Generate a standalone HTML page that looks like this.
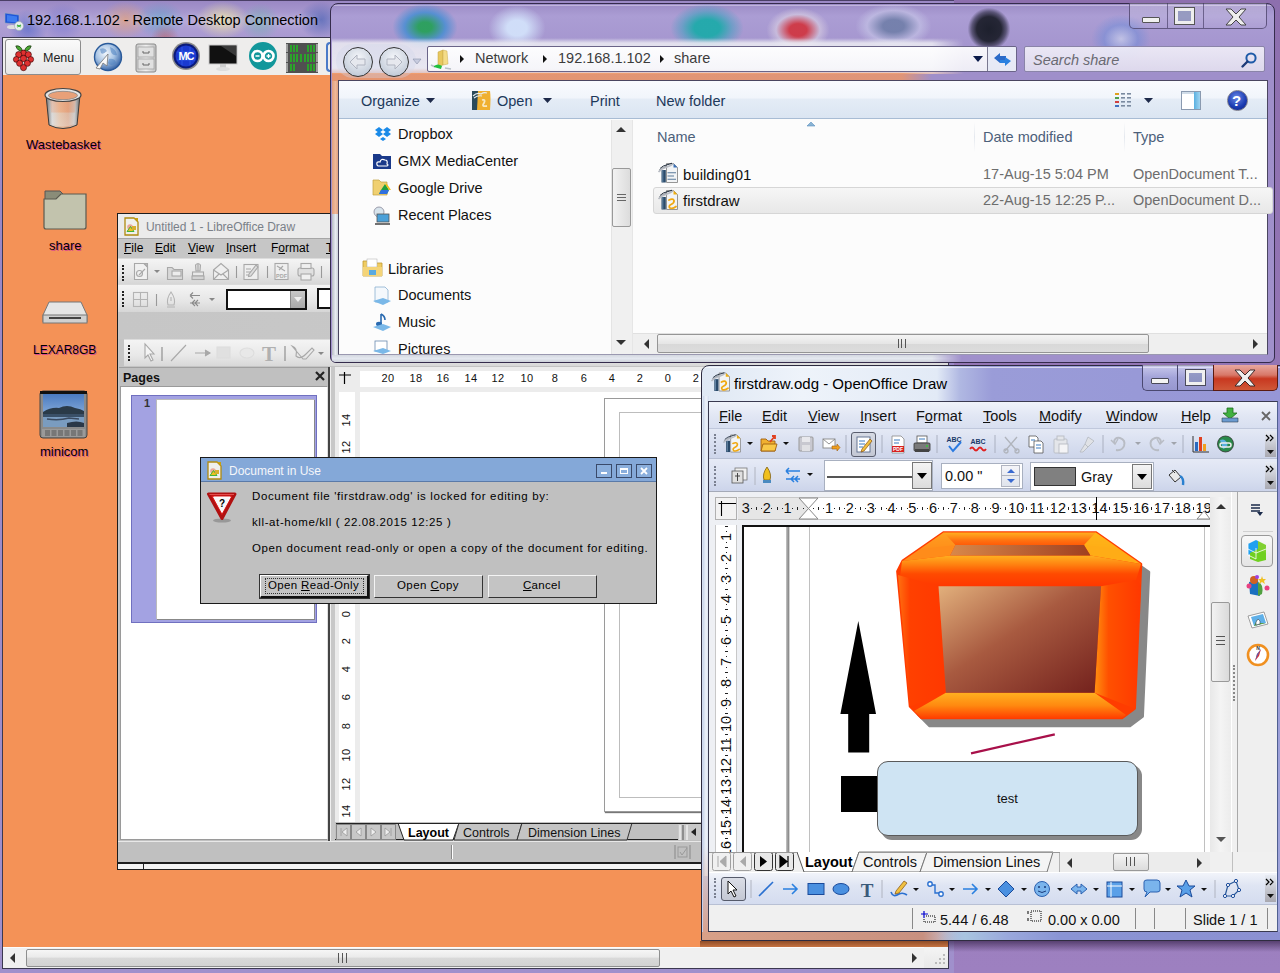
<!DOCTYPE html>
<html><head><meta charset="utf-8">
<style>
*{box-sizing:border-box;margin:0;padding:0}
html,body{width:1280px;height:973px;overflow:hidden}
body{position:relative;font-family:"Liberation Sans",sans-serif;background:linear-gradient(180deg,#8d6fae 0%,#9d80c0 100%);}
.a{position:absolute}
.t{position:absolute;white-space:nowrap;line-height:1}
svg{position:absolute}
</style></head><body>
<!-- ===== Remote Desktop window ===== -->
<div id="rdc" class="a" style="left:0;top:0;width:954px;height:973px;background:linear-gradient(180deg,#9a88c4 0px,#b0a2d6 20px,#a897cf 40px,#9988c6 200px,#a090cc 973px);border-top:1px solid #4a3f66;border-radius:0">
  <div class="a" style="left:8px;top:8px;width:40px;height:38px;background:radial-gradient(ellipse at center,rgba(60,90,200,.55),rgba(160,150,210,0) 70%)"></div>
  <div class="a" style="left:40px;top:2px;width:45px;height:38px;background:radial-gradient(ellipse at center,rgba(90,100,210,.5),rgba(160,150,210,0) 70%)"></div>
  <div class="a" style="left:100px;top:0px;width:50px;height:38px;background:radial-gradient(ellipse at center,rgba(235,160,110,.65),rgba(160,150,210,0) 70%)"></div>
  <div class="a" style="left:135px;top:0px;width:50px;height:38px;background:radial-gradient(ellipse at center,rgba(70,160,200,.55),rgba(160,150,210,0) 70%)"></div>
  <div class="a" style="left:150px;top:22px;width:30px;height:38px;background:radial-gradient(ellipse at center,rgba(200,70,50,.5),rgba(160,150,210,0) 70%)"></div>
  <div class="a" style="left:195px;top:0px;width:55px;height:38px;background:radial-gradient(ellipse at center,rgba(245,235,160,.75),rgba(160,150,210,0) 70%)"></div>
  <div class="a" style="left:240px;top:2px;width:40px;height:38px;background:radial-gradient(ellipse at center,rgba(100,180,170,.55),rgba(160,150,210,0) 70%)"></div>
  <div class="a" style="left:298px;top:0px;width:45px;height:38px;background:radial-gradient(ellipse at center,rgba(50,80,170,.6),rgba(160,150,210,0) 70%)"></div>
  <div class="a" style="left:380px;top:0px;width:60px;height:38px;background:radial-gradient(ellipse at center,rgba(230,230,240,.4),rgba(160,150,210,0) 70%)"></div>
  <svg class="a" style="left:4px;top:10px" width="20" height="20" viewBox="0 0 20 20"><path d="M1 2 L15 4 L15 13 L1 12 Z" fill="#1f55d8" stroke="#9ab" stroke-width=".6"/><path d="M3 4 L13 5.5 L13 11.5 L3 10.5Z" fill="#3d7cf0"/><ellipse cx="8" cy="16" rx="5" ry="2" fill="#ddd"/><circle cx="15" cy="15" r="4.5" fill="#e8eef0" stroke="#9aa" stroke-width=".6"/><path d="M13 14 L17 16 M13 16 L17 14" stroke="#3a3" stroke-width="1.2"/></svg>
  <div class="t" style="left:27px;top:12px;font-size:14.5px;color:#000;text-shadow:0 0 6px rgba(255,255,255,.5)">192.168.1.102 - Remote Desktop Connection</div>
  <div id="client" class="a" style="left:2px;top:36px;width:947px;height:932px;background:#f49257;border:1px solid #3b3850;overflow:hidden">
    <!-- panel -->
    <div class="a" style="left:0;top:0;width:946px;height:37px;background:#eeedec;"></div>
    <div class="a" style="left:2px;top:1px;width:76px;height:36px;background:linear-gradient(#fafafa,#e6e6e6);border:1px solid #8c8c8c;border-radius:3px"></div>
    <svg class="a" style="left:8px;top:4px" width="25" height="31" viewBox="0 0 26 30">
      <path d="M5 3 Q10 2 12 8 Q7 9 5 3Z M21 3 Q16 2 14 8 Q19 9 21 3Z" fill="#4aa832" stroke="#1a3a10" stroke-width=".8"/>
      <g fill="#e03030" stroke="#3a0808" stroke-width=".7">
      <circle cx="13" cy="10.5" r="3.2"/><circle cx="8" cy="12" r="3.2"/><circle cx="18" cy="12" r="3.2"/>
      <circle cx="5.5" cy="17" r="3"/><circle cx="20.5" cy="17" r="3"/><circle cx="13" cy="16" r="3.3"/>
      <circle cx="9" cy="21" r="3.2"/><circle cx="17" cy="21" r="3.2"/><circle cx="13" cy="25.5" r="3.2"/></g>
    </svg>
    <div class="t" style="left:40px;top:14px;font-size:12.5px;color:#222">Menu</div>
    <!-- launcher icons -->
    <svg class="a" style="left:88px;top:3px" width="32" height="32" viewBox="0 0 32 32"><defs><radialGradient id="glb" cx=".4" cy=".35" r=".7"><stop offset="0" stop-color="#f4f8fc"/><stop offset=".5" stop-color="#a8c4e4"/><stop offset="1" stop-color="#2a5aa0"/></radialGradient></defs><circle cx="17" cy="16" r="13.5" fill="url(#glb)" stroke="#2a5a9a" stroke-width="1.4"/><path d="M9 8 Q14 6 16 10 Q12 14 10 12Z M19 6 Q25 8 26 14 Q22 15 20 11Z M18 18 Q24 17 25 22 Q20 26 17 22Z" fill="#4a80c0" opacity=".55"/><path d="M5 27 L17 13 L16 25 L12 22 L9 28Z" fill="#fafafa" stroke="#777" stroke-width=".8"/></svg>
    <svg class="a" style="left:131px;top:5px" width="24" height="30" viewBox="0 0 24 30"><defs><linearGradient id="cab" x1="0" x2="1"><stop offset="0" stop-color="#c8c8c8"/><stop offset=".5" stop-color="#f0f0f0"/><stop offset="1" stop-color="#c0c0c0"/></linearGradient></defs><rect x="2" y="1" width="20" height="28" rx="2" fill="url(#cab)" stroke="#8a8a8a"/><rect x="4" y="4" width="16" height="10" fill="#e0e0e0" stroke="#9a9a9a" stroke-width=".7"/><rect x="4" y="16" width="16" height="10" fill="#e0e0e0" stroke="#9a9a9a" stroke-width=".7"/><path d="M9 8 L9 10 L15 10 L15 8" stroke="#666" fill="none"/><path d="M9 20 L9 22 L15 22 L15 20" stroke="#666" fill="none"/></svg>
    <svg class="a" style="left:168px;top:3px" width="30" height="30" viewBox="0 0 30 30"><circle cx="15" cy="15" r="14" fill="#8a8a8a"/><circle cx="15" cy="15" r="12.5" fill="#0a1a7a"/><circle cx="15" cy="15" r="10.5" fill="#1a3ad0"/><path d="M6 11 L24 11 M6 19 L24 19 M11 6 L11 24 M19 6 L19 24" stroke="#3a6af0" stroke-width=".6"/><text x="15" y="19" font-size="11" font-weight="bold" fill="#fff" text-anchor="middle" font-family="Liberation Sans" letter-spacing="-1">MC</text></svg>
    <svg class="a" style="left:204px;top:6px" width="32" height="28" viewBox="0 0 32 28"><rect x="2" y="1" width="28" height="19" fill="#111" stroke="#ccc"/><path d="M14 2 L29 2 L29 12Z" fill="#3a3a3a"/><rect x="13" y="20" width="6" height="4" fill="#ccc"/><ellipse cx="16" cy="25" rx="7" ry="2" fill="#ddd"/></svg>
    <svg class="a" style="left:245px;top:3px" width="30" height="30" viewBox="0 0 30 30"><circle cx="15" cy="15" r="14" fill="#12979b"/><path d="M4.5 15 a5 5 0 1 1 10 0 a5 5 0 1 1 -10 0 M15.5 15 a5 5 0 1 1 10 0 a5 5 0 1 1 -10 0" fill="none" stroke="#fff" stroke-width="2.6"/><path d="M7.5 15 L11.5 15 M18.5 15 L22.5 15 M20.5 13 L20.5 17" stroke="#fff" stroke-width="1.3"/></svg>
    <svg class="a" style="left:282px;top:5px" width="34" height="30" viewBox="0 0 34 30"><rect x="1" y="0" width="32" height="30" fill="#505050"/><g stroke="#1fc01f" stroke-width="1.5"><path d="M6 2V9M9 2V9M12 2V9M23 2V9M26 2V9M29 2V9M6 11V19M9 11V19M12 11V19M16 11V19M20 11V19M23 11V19M26 11V19M29 11V19M6 21V28M9 21V28M23 21V28M26 21V28M29 21V28"/></g><g stroke="#eee" stroke-width="1"><path d="M2 1V9M32 1V9M2 10V19M32 10V19M2 20V29M32 20V29"/></g></svg>
    <div class="a" style="left:323px;top:4px;width:10px;height:30px;border:2px solid #4a7ac8;border-right:none;border-radius:4px 0 0 4px"></div>

    <!-- desktop icons -->
    <svg class="a" style="left:40px;top:49px" width="40" height="45" viewBox="0 0 40 45"><defs><linearGradient id="bin" x1="0" x2="1"><stop offset="0" stop-color="#707070"/><stop offset=".18" stop-color="#d8d8d8"/><stop offset=".4" stop-color="#e8c0a0"/><stop offset=".65" stop-color="#e0a888"/><stop offset=".85" stop-color="#c8c8c8"/><stop offset="1" stop-color="#6a6a6a"/></linearGradient><linearGradient id="binv" x1="0" y1="0" x2="0" y2="1"><stop offset="0" stop-color="#f09060" stop-opacity=".35"/><stop offset=".5" stop-color="#f09060" stop-opacity=".25"/><stop offset=".55" stop-color="#dcdcdc" stop-opacity=".3"/><stop offset="1" stop-color="#e8e8e8" stop-opacity=".4"/></linearGradient></defs><path d="M3 8 L6 38 Q20 45 34 38 L37 8Z" fill="url(#bin)" stroke="#3a3a3a" stroke-width="1"/><path d="M7 10 L9 37 Q20 42 31 37 L33 10Z" fill="url(#binv)"/><ellipse cx="20" cy="8" rx="18" ry="6.5" fill="#e4e4e4" stroke="#444" stroke-width="1.2"/><ellipse cx="20" cy="8.5" rx="14.5" ry="4.2" fill="#e8a078" stroke="#888" stroke-width=".8"/></svg>
    <div class="t" style="left:23px;top:100px;font-size:13px;color:#000;text-shadow:1px 1px 0 rgba(190,0,190,.5)">Wastebasket</div>
    <svg class="a" style="left:39px;top:152px" width="46" height="40" viewBox="0 0 46 40"><path d="M3 1 L18 1 L22 5 L43 5 L43 20 L3 20Z" fill="#8a8c78" stroke="#555" stroke-width="1"/><path d="M2 9 L14 9 L19 4 L44 4 L44 37 Q44 39 42 39 L4 39 Q2 39 2 37Z" fill="#c2c3ad" stroke="#5a5a50" stroke-width="1.2"/></svg>
    <div class="t" style="left:46px;top:201px;font-size:13px;color:#000;text-shadow:1px 1px 0 rgba(190,0,190,.5)">share</div>
    <svg class="a" style="left:38px;top:263px" width="48" height="24" viewBox="0 0 48 24"><path d="M8 1 L40 1 L46 14 L46 21 L2 21 L2 14Z" fill="#e6e6e6" stroke="#777" stroke-width="1"/><rect x="2" y="14" width="44" height="8" fill="#d0d0d0" stroke="#777" stroke-width="1"/><rect x="8" y="16" width="32" height="2" fill="#444"/></svg>
    <div class="t" style="left:30px;top:306px;font-size:12px;color:#000;text-shadow:1px 1px 0 rgba(190,0,190,.5);letter-spacing:0px">LEXAR8GB</div>
    <svg class="a" style="left:36px;top:352px" width="50" height="49" viewBox="0 0 50 49"><defs><linearGradient id="sky" x1="0" y1="0" x2="0" y2="1"><stop offset="0" stop-color="#4a7ac0"/><stop offset="1" stop-color="#a8c8e8"/></linearGradient></defs><rect x="1" y="1" width="47" height="47" rx="3" fill="#8a8a8a" stroke="#444"/><rect x="1" y="1" width="47" height="3" fill="#111"/><rect x="4" y="4" width="41" height="33" fill="url(#sky)"/><path d="M4 22 Q12 17 20 18 Q28 14 36 18 Q42 19 45 21 L45 24 L4 24Z" fill="#2a3a48"/><rect x="4" y="24" width="41" height="3" fill="#3a5068"/><path d="M4 27 L45 27 L45 37 L4 37Z" fill="#7a9cc0"/><path d="M8 29 Q20 31 30 28 L40 29" stroke="#3a4a60" stroke-width="1.5" fill="none"/><path d="M28 33 Q38 30 45 33 L45 37 L28 37Z" fill="#2a3848"/><rect x="3" y="39" width="43" height="8" fill="#9a9a9a"/><g fill="#777"><rect x="6" y="40" width="5" height="6"/><rect x="12.5" y="40" width="5" height="6"/><rect x="19" y="40" width="5" height="6"/><rect x="25.5" y="40" width="5" height="6"/><rect x="32" y="40" width="5" height="6"/><rect x="38.5" y="40" width="5" height="6"/></g></svg>
    <div class="t" style="left:37px;top:407px;font-size:13px;color:#000;text-shadow:1px 1px 0 rgba(190,0,190,.5)">minicom</div>

    <!-- bottom scrollbar -->
    <div class="a" style="left:0;top:909px;width:946px;height:22px;background:#f0f0f0;border-top:1px solid #fcfcfc"></div>
    <svg class="a" style="left:6px;top:914px" width="8" height="12" viewBox="0 0 8 12"><path d="M6 1 L1 6 L6 11Z" fill="#333"/></svg>
    <div class="a" style="left:23px;top:911px;width:634px;height:18px;background:linear-gradient(#f6f6f6 0%,#eaeaea 45%,#d9d9d9 50%,#d2d2d2 100%);border:1px solid #8e8f8f;border-radius:2px"></div>
    <div class="a" style="left:335px;top:915px;width:9px;height:10px;border-left:1px solid #555;border-right:1px solid #555"></div>
    <div class="a" style="left:339px;top:915px;width:1px;height:10px;background:#555"></div>
    <svg class="a" style="left:907px;top:914px" width="8" height="12" viewBox="0 0 8 12"><path d="M2 1 L7 6 L2 11Z" fill="#333"/></svg>
    <div class="a" style="left:921px;top:909px;width:25px;height:22px;background:linear-gradient(180deg,#f4f4f4,#e8e8e8)"></div>
    <svg class="a" style="left:930px;top:914px" width="14" height="14" viewBox="0 0 14 14"><g fill="#bbb"><rect x="10" y="2" width="2" height="2"/><rect x="6" y="6" width="2" height="2"/><rect x="10" y="6" width="2" height="2"/><rect x="2" y="10" width="2" height="2"/><rect x="6" y="10" width="2" height="2"/><rect x="10" y="10" width="2" height="2"/></g></svg>
    <div class="a" style="left:697px;top:903px;width:250px;height:6px;background:linear-gradient(180deg,rgba(60,20,0,.55),rgba(60,20,0,.25))"></div>
    <!-- ===== LibreOffice window ===== -->
    <div id="lo" class="a" style="left:114px;top:175px;width:850px;height:657px;overflow:hidden">
      <div class="a" style="left:0;top:0;width:850px;height:657px;border:1px solid #1c1c1c;background:#c4c4c4"></div>
      <div class="a" style="left:1px;top:1px;width:848px;height:24px;background:#ebebeb"></div>
      <svg style="left:7px;top:4px" width="15" height="19" viewBox="0 0 15 19"><path d="M1 1 L10 1 L14 5 L14 18 L1 18Z" fill="#f0f0ec" stroke="#b08a10" stroke-width="1.3"/><path d="M10 1 L14 1 L14 5Z" fill="#c8a010"/><circle cx="6" cy="10" r="2.8" fill="#e8a090" opacity=".9"/><path d="M3 14.5 L6.5 9.5 L10 14.5Z" fill="#f0c020" stroke="#30b030" stroke-width=".9"/><rect x="8" y="9" width="4" height="4" fill="#d8b030"/></svg>
      <div class="t" style="left:29px;top:8px;font-size:12px;color:#7a8088;letter-spacing:-.05px">Untitled 1 - LibreOffice Draw</div>
      <div class="a" style="left:1px;top:25px;width:848px;height:1px;background:#a6a6a6"></div>
      <div class="a" style="left:1px;top:26px;width:848px;height:19px;background:#c6c6c6"></div>
      <div class="t" style="left:7px;top:29px;font-size:12px;color:#000;word-spacing:0">
        <span class="t" style="left:0"><u>F</u>ile</span><span class="t" style="left:31px"><u>E</u>dit</span><span class="t" style="left:64px"><u>V</u>iew</span><span class="t" style="left:102px"><u>I</u>nsert</span><span class="t" style="left:147px">F<u>o</u>rmat</span><span class="t" style="left:202px"><u>T</u>ools</span>
      </div>
      <!-- toolbar 1 -->
      <div class="a" style="left:1px;top:45px;width:848px;height:26px;background:linear-gradient(#f4f4f4,#e6e6e6 60%,#d6d6d6);border-top:1px solid #dcdcdc"></div>
      <svg style="left:15px;top:48px" width="300" height="22" viewBox="0 0 300 22" fill="none" stroke="#a8a8a8" stroke-width="1.1">
        <path d="M2.5 2.5 L12 2.5 L15.5 6 L15.5 18.5 L2.5 18.5Z" fill="#f0f0f0"/><path d="M12 2.5 L15.5 2.5 L15.5 6Z" fill="#bbb"/><circle cx="7.5" cy="12.5" r="3"/><path d="M7 14 L13 8"/>
        <path d="M22 9 L28 9 L25 12Z" fill="#888" stroke="none"/>
        <path d="M35.5 6.5 L40 6.5 L42 8.5 L50.5 8.5 L50.5 18.5 L35.5 18.5Z" fill="#d8d8d8"/><rect x="40" y="10" width="9" height="5" fill="#ececec"/>
        <path d="M66 2 L66 10 M63.5 4 Q66 1 68.5 4 L68 10 L64 10Z" fill="#ddd"/><rect x="60.5" y="11" width="11" height="4" fill="#e8e8e8"/><rect x="60" y="15" width="12" height="3.5" fill="#d4d4d4"/>
        <path d="M81.5 9 L89 2.5 L96.5 9 L96.5 18.5 L81.5 18.5Z" fill="#efefef"/><path d="M81.5 9 L89 14 L96.5 9 M81.5 18.5 L87 13 M96.5 18.5 L91 13"/>
        <path d="M104.5 5 L104.5 17" stroke="#999"/>
        <rect x="112" y="3.5" width="14" height="15" fill="#efefef"/><path d="M114 8 L119 8 M114 11 L119 11 M114 14 L118 14"/><path d="M117 13 L124 4 L126 6 L119 15 L116.5 15.5Z" fill="#ddd"/>
        <path d="M135.5 5 L135.5 17" stroke="#999"/>
        <rect x="143" y="2.5" width="13" height="16" fill="#efefef"/><path d="M145 5 L153 10 M147 9 L151 5"/><text x="149.5" y="17" font-size="5.5" font-weight="bold" fill="#a8a8a8" stroke="none" text-anchor="middle" font-family="Liberation Sans">PDF</text>
        <rect x="166" y="7" width="16" height="8" rx="2" fill="#e0e0e0"/><rect x="169" y="2.5" width="10" height="5" fill="#efefef"/><rect x="169" y="13" width="10" height="6" fill="#f0f0f0"/>
        <path d="M189.5 5 L189.5 17" stroke="#999"/>
      </svg>
      <!-- toolbar 2 -->
      <div class="a" style="left:1px;top:71px;width:848px;height:28px;background:linear-gradient(#f4f4f4,#e6e6e6 60%,#d6d6d6);border-top:1px solid #dadada"></div>
      <svg style="left:14px;top:76px" width="100" height="22" viewBox="0 0 100 22" fill="none" stroke="#b4b4b4" stroke-width="1.1">
        <rect x="2.5" y="3.5" width="14" height="14"/><path d="M9.5 3.5 L9.5 17.5 M2.5 10.5 L16.5 10.5"/>
        <path d="M25.5 5 L25.5 17" stroke="#999"/>
        <path d="M40 3 Q35 10 37 16 L43 16 Q45 10 40 3Z M40 8 L40 12 M36 18 L44 18"/>
        <path d="M59 6.5 L69 6.5 M59 6.5 L62 3.5 M59 6.5 L62 9.5 M59 14 L69 14 M61 14 L64 11 M61 14 L64 17 M64 14 L67 11 M64 14 L67 17" stroke="#8a8a8a"/>
        <path d="M78 9 L84 9 L81 12Z" fill="#888" stroke="none"/>
      </svg>
      <div class="a" style="left:109px;top:76px;width:81px;height:21px;background:#fff;border:2px solid #111;border-right-width:2px"></div>
      <div class="a" style="left:173px;top:78px;width:15px;height:17px;background:linear-gradient(#c8c8c8,#a8a8a8);border-left:1px solid #888"></div>
      <svg style="left:176px;top:83px" width="10" height="7" viewBox="0 0 10 7"><path d="M1 1 L9 1 L5 6Z" fill="#eee"/></svg>
      <div class="a" style="left:200px;top:75px;width:30px;height:21px;background:#fff;border:2px solid #111"></div>
      <!-- gray area -->
      <div class="a" style="left:1px;top:99px;width:848px;height:27px;background:linear-gradient(90deg,#c6c6c6,#cbcbcb)"></div>
      <!-- toolbar 3 -->
      <div class="a" style="left:7px;top:126px;width:842px;height:27px;background:linear-gradient(#f4f4f4,#e8e8e8 60%,#d8d8d8);border-top:1px solid #dcdcdc"></div>
      <svg style="left:23px;top:129px" width="200" height="22" viewBox="0 0 200 22" fill="none" stroke="#a8a8a8" stroke-width="1.1">
        <path d="M5 2 L5 16 L8 13 L11 19 L13 18 L10 12 L14 12Z" fill="#f4f4f4"/>
        <path d="M22 5 L22 19" stroke="#888"/>
        <path d="M31 19 L46 3"/>
        <path d="M55 11 L69 11 M65 8 L70 11 L65 14" fill="#aaa"/>
        <rect x="77" y="5" width="13" height="11" fill="#e0e0e0" stroke="#ddd"/>
        <ellipse cx="107" cy="11" rx="7" ry="5" fill="#e8e8e8" stroke="#ddd"/>
        <text x="122" y="19" font-size="21" font-weight="bold" fill="#b0b0b0" stroke="none" font-family="Liberation Serif">T</text>
        <path d="M145 4 L145 19" stroke="#888"/>
        <path d="M152 4 Q158 6 156 14 Q160 18 166 12 L172 6 L174 8 L166 17 L163 17Z"/>
        <path d="M178 10 L184 10 L181 13Z" fill="#888" stroke="none"/>
      </svg>
      <div class="a" style="left:5px;top:52px;width:2px;height:16px;border-left:2px dotted #222"></div>
      <div class="a" style="left:5px;top:78px;height:18px;width:2px;height:16px;border-left:2px dotted #222"></div>
      <div class="a" style="left:11px;;top:132px;width:2px;height:16px;border-left:2px dotted #222"></div>
      <!-- Pages panel -->
      <div class="a" style="left:2px;top:154px;width:209px;height:474px;background:#c0c0c0;border-top:1px solid #a0a0a0"></div>
      <div class="t" style="left:6px;top:159px;font-size:12.5px;font-weight:bold;color:#111">Pages</div>
      <svg style="left:197px;top:157px" width="12" height="12" viewBox="0 0 12 12"><path d="M2 2 L10 10 M10 2 L2 10" stroke="#222" stroke-width="2.2"/></svg>
      <div class="a" style="left:3px;top:173px;width:208px;height:454px;background:#fff;border:1px solid #9a9a9a;border-right-color:#e0e0e0"></div>
      <div class="a" style="left:14px;top:182px;width:186px;height:228px;background:#a3a2e2;border:1px solid #7070c0"></div>
      <div class="t" style="left:27px;top:185px;font-size:11px;font-weight:bold;color:#333">1</div>
      <div class="a" style="left:39px;top:186px;width:158px;height:220px;background:#fff;border-left:1px solid #bbb;border-top:1px solid #bbb;box-shadow:1px 1px 0 #888"></div>
      <!-- splitter -->
      <div class="a" style="left:211px;top:154px;width:2px;height:474px;background:#444"></div>
      <div class="a" style="left:213px;top:154px;width:5px;height:474px;background:#c8c8c8"></div>
      <div class="a" style="left:213px;top:154px;width:1px;height:474px;background:#f0f0f0"></div>
      <!-- ruler/canvas area -->
      <div class="a" style="left:218px;top:154px;width:400px;height:456px;background:#ececec"></div>
      <div class="a" style="left:243px;top:158px;width:400px;height:16px;background:#fff"></div>
      <div class="a" style="left:222px;top:179px;width:16px;height:431px;background:#fff"></div>
      <div class="a" style="left:243px;top:179px;width:400px;height:431px;background:#fff"></div>
      <svg style="left:221px;top:158px" width="14" height="14" viewBox="0 0 14 14"><path d="M1 4 L13 4 M6.5 1 L6.5 13" stroke="#000" stroke-width="1.2"/></svg>
      <div class="a" style="left:243px;top:160px;width:400px;height:14px;font-size:11px;color:#111;letter-spacing:.4px"><div class="t" style="left:16px;top:0;width:24px;text-align:center">20</div><div class="t" style="left:44px;top:0;width:24px;text-align:center">18</div><div class="t" style="left:71px;top:0;width:24px;text-align:center">16</div><div class="t" style="left:99px;top:0;width:24px;text-align:center">14</div><div class="t" style="left:126px;top:0;width:24px;text-align:center">12</div><div class="t" style="left:155px;top:0;width:24px;text-align:center">10</div><div class="t" style="left:183px;top:0;width:24px;text-align:center">8</div><div class="t" style="left:212px;top:0;width:24px;text-align:center">6</div><div class="t" style="left:240px;top:0;width:24px;text-align:center">4</div><div class="t" style="left:268px;top:0;width:24px;text-align:center">2</div><div class="t" style="left:296px;top:0;width:24px;text-align:center">0</div><div class="t" style="left:324px;top:0;width:24px;text-align:center">2</div></div>
      <div class="a" style="left:222px;top:179px;width:16px;height:431px;font-size:11px;color:#111;letter-spacing:.4px"><div class="t" style="left:-4px;top:22px;width:24px;height:12px;text-align:center;transform:rotate(-90deg)">14</div><div class="t" style="left:-4px;top:49px;width:24px;height:12px;text-align:center;transform:rotate(-90deg)">12</div><div class="t" style="left:-4px;top:216px;width:24px;height:12px;text-align:center;transform:rotate(-90deg)">0</div><div class="t" style="left:-4px;top:243px;width:24px;height:12px;text-align:center;transform:rotate(-90deg)">2</div><div class="t" style="left:-4px;top:271px;width:24px;height:12px;text-align:center;transform:rotate(-90deg)">4</div><div class="t" style="left:-4px;top:299px;width:24px;height:12px;text-align:center;transform:rotate(-90deg)">6</div><div class="t" style="left:-4px;top:328px;width:24px;height:12px;text-align:center;transform:rotate(-90deg)">8</div><div class="t" style="left:-4px;top:357px;width:24px;height:12px;text-align:center;transform:rotate(-90deg)">10</div><div class="t" style="left:-4px;top:386px;width:24px;height:12px;text-align:center;transform:rotate(-90deg)">12</div><div class="t" style="left:-4px;top:413px;width:24px;height:12px;text-align:center;transform:rotate(-90deg)">14</div></div>
      <!-- page outline -->
      <div class="a" style="left:487px;top:185px;width:200px;height:414px;background:#fff;border:1px solid #9a9a9a;box-shadow:1px 1px 1px #777"></div>
      <div class="a" style="left:502px;top:199px;width:200px;height:386px;border:1px solid #bdbdbd"></div>
      <!-- tab bar -->
      <div class="a" style="left:218px;top:609px;width:400px;height:19px;background:#c0c0c0"></div>
      <div class="a" style="left:218px;top:626px;width:400px;height:1px;background:#222"></div>
      <svg style="left:219px;top:610px" width="500" height="18" viewBox="0 0 500 18">
        <g fill="#c8c8c8" stroke="#888"><rect x="0.5" y="1.5" width="14" height="15"/><rect x="15.5" y="1.5" width="14" height="15"/><rect x="30.5" y="1.5" width="14" height="15"/><rect x="45.5" y="1.5" width="14" height="15"/></g>
        <g fill="#eee" stroke="#999" stroke-width=".8"><path d="M5 5 L5 13 M11 5 L6 9 L11 13Z"/><path d="M25 5 L20 9 L25 13Z"/><path d="M35 5 L40 9 L35 13Z"/><path d="M49 5 L54 9 L49 13Z M55 5 L55 13"/></g>
        <path d="M62 0 L68 17 L117 17 L123 0" fill="#fff" stroke="#222" stroke-width="1"/>
        <path d="M123 0 L118 17 L181 17 L186 0Z" fill="#c4c4c4" stroke="#333" stroke-width="1"/>
        <path d="M186 0 L181 17 L291 17 L296 0Z" fill="#c4c4c4" stroke="#333" stroke-width="1"/>
        <path d="M0 0.5 L500 0.5" stroke="#222"/>
        <rect x="342" y="1" width="40" height="16" fill="#c8c8c8" stroke="none"/>
        <path d="M344 2 L344 17" stroke="#fff"/><path d="M347 2 L347 17" stroke="#555"/>
        <path d="M351 2 L351 17" stroke="#fff"/><path d="M360 5 L355 9 L360 13Z" fill="#222"/>
      </svg>
      <div class="t" style="left:291px;top:614px;font-size:12.5px;font-weight:bold;color:#000">Layout</div>
      <div class="t" style="left:346px;top:614px;font-size:12.5px;color:#111">Controls</div>
      <div class="t" style="left:411px;top:614px;font-size:12.5px;color:#111">Dimension Lines</div>
      <!-- status bar -->
      <div class="a" style="left:1px;top:628px;width:848px;height:21px;background:#c0c0c0;border-top:1px solid #e8e8e8"></div>
      <div class="a" style="left:334px;top:632px;width:2px;height:14px;background:#888;border-right:1px solid #fff"></div>
      <svg style="left:555px;top:631px" width="20" height="16" viewBox="0 0 20 16"><path d="M3 1 L3 15 M18 1 L18 15" stroke="#888"/><rect x="6" y="3" width="9" height="10" fill="none" stroke="#999"/><path d="M8 8 L10 11 L15 4" stroke="#999" fill="none"/></svg>
      <div class="a" style="left:1px;top:649px;width:848px;height:2px;background:#1c1c1c"></div>
      <div class="a" style="left:1px;top:651px;width:848px;height:5px;background:#f2f2f2"></div>
      <div class="a" style="left:26px;top:651px;width:1px;height:5px;background:#222"></div>
    </div>
    <!-- ===== Dialog ===== -->
    <div id="dlg" class="a" style="left:197px;top:419px;width:457px;height:147px">
      <div class="a" style="left:0;top:0;width:457px;height:147px;background:#c0c0c0;border:1px solid #1a1a1a"></div>
      <div class="a" style="left:1px;top:1px;width:455px;height:24px;background:#84a8d8;border-bottom:1px solid #5a7aa8"></div>
      <svg style="left:7px;top:4px" width="15" height="19" viewBox="0 0 15 19"><path d="M1 1 L10 1 L14 5 L14 18 L1 18Z" fill="#f0f0ec" stroke="#b08a10" stroke-width="1.3"/><path d="M10 1 L14 1 L14 5Z" fill="#c8a010"/><circle cx="6" cy="10" r="2.8" fill="#e8a090" opacity=".9"/><path d="M3 14.5 L6.5 9.5 L10 14.5Z" fill="#f0c020" stroke="#30b030" stroke-width=".9"/><rect x="8" y="9" width="4" height="4" fill="#d8b030"/></svg>
      <div class="t" style="left:29px;top:8px;font-size:12px;color:#f4f6fa">Document in Use</div>
      <div class="a" style="left:396px;top:7px;width:16px;height:14px;border:1px solid #3a4a6a;background:#8aaedc"></div>
      <div class="a" style="left:401px;top:15px;width:6px;height:2px;background:#fff"></div>
      <div class="a" style="left:416px;top:7px;width:16px;height:14px;border:1px solid #3a4a6a;background:#8aaedc"></div>
      <div class="a" style="left:420px;top:11px;width:8px;height:6px;border:1px solid #fff;border-top-width:2px"></div>
      <div class="a" style="left:436px;top:7px;width:16px;height:14px;border:1px solid #3a4a6a;background:#8aaedc"></div>
      <svg style="left:439px;top:9px" width="10" height="10" viewBox="0 0 10 10"><path d="M2 2 L8 8 M8 2 L2 8" stroke="#fff" stroke-width="1.8"/></svg>
      <svg style="left:6px;top:34px" width="32" height="32" viewBox="0 0 32 32"><ellipse cx="16" cy="29.5" rx="9" ry="2" fill="#888" opacity=".7"/><path d="M2.5 3 L29 3 L16 27.5Z" fill="#dc1c1c" stroke="#b01010" stroke-width="3" stroke-linejoin="round"/><path d="M3.5 3.5 L28 3.5" stroke="#f06060" stroke-width=".8"/><path d="M7.6 6 L24.4 6 L16 21.5Z" fill="#f8f8f8" stroke="#fff" stroke-width="1" stroke-linejoin="round"/><text x="16" y="15.5" font-size="10" font-weight="bold" fill="#000" text-anchor="middle" font-family="Liberation Sans">?</text></svg>
      <div class="t" style="left:52px;top:34px;font-size:11.5px;letter-spacing:.62px;color:#000">Document file 'firstdraw.odg' is locked for editing by:</div>
      <div class="t" style="left:52px;top:60px;font-size:11.5px;letter-spacing:.6px;color:#000">kll-at-home/kll ( 22.08.2015 12:25 )</div>
      <div class="t" style="left:52px;top:86px;font-size:11.5px;letter-spacing:.62px;color:#000">Open document read-only or open a copy of the document for editing.</div>
      <div class="a" style="left:60px;top:118px;width:109px;height:23px;background:#c4c4c4;border:1px solid #fff;border-right:2px solid #111;border-bottom:2px solid #111;outline:1px solid #333"></div>
      <div class="a" style="left:65px;top:121px;width:99px;height:16px;border:1px dotted #333"></div>
      <div class="t" style="left:68px;top:123px;font-size:11.5px;letter-spacing:.34px;color:#000">Open <u>R</u>ead-Only</div>
      <div class="a" style="left:174px;top:118px;width:109px;height:23px;background:#c4c4c4;border:1px solid #f4f4f4;border-right:1px solid #333;border-bottom:1px solid #333"></div>
      <div class="t" style="left:197px;top:123px;font-size:11.5px;letter-spacing:.42px;color:#000">Open <u>C</u>opy</div>
      <div class="a" style="left:288px;top:118px;width:109px;height:23px;background:#c4c4c4;border:1px solid #f4f4f4;border-right:1px solid #333;border-bottom:1px solid #333"></div>
      <div class="t" style="left:323px;top:123px;font-size:11.5px;letter-spacing:.28px;color:#000"><u>C</u>ancel</div>
    </div>

  </div>
</div>
<!-- ===== Explorer window ===== -->
<div id="exp" class="a" style="left:330px;top:3px;width:945px;height:360px">
  <div class="a" style="left:0;top:0;width:945px;height:360px;border:1px solid #352c4c;border-radius:8px 8px 6px 6px;background:linear-gradient(180deg,#9c8cc6 0px,#ab9dd4 12px,#a596cf 40px,#9f8fca 70px,#a090cb 360px);overflow:hidden">
    <div class="a" style="left:1px;top:1px;width:941px;height:1px;background:rgba(255,255,255,.35)"></div>
    <div class="a" style="left:62px;top:0px;width:64px;height:46px;background:radial-gradient(ellipse at center,rgba(40,160,90,.95) 15%,rgba(60,140,210,.75) 45%,rgba(160,150,210,0) 72%)"></div>
    <div class="a" style="left:158px;top:2px;width:56px;height:44px;background:radial-gradient(ellipse at center,rgba(210,225,250,.95) 25%,rgba(160,150,210,0) 72%)"></div>
    <div class="a" style="left:340px;top:0px;width:72px;height:48px;background:radial-gradient(ellipse at center,rgba(30,170,170,.95) 25%,rgba(60,160,190,.5) 50%,rgba(160,150,210,0) 72%)"></div>
    <div class="a" style="left:436px;top:4px;width:62px;height:44px;background:radial-gradient(ellipse at center,rgba(210,50,60,.9) 20%,rgba(230,220,230,.5) 50%,rgba(160,150,210,0) 72%)"></div>
    <div class="a" style="left:525px;top:0px;width:75px;height:44px;background:radial-gradient(ellipse at center,rgba(100,120,160,.75) 20%,rgba(210,215,240,.45) 50%,rgba(160,150,210,0) 72%)"></div>
    <div class="a" style="left:629px;top:-4px;width:58px;height:58px;background:radial-gradient(circle at center,rgba(25,28,40,.97) 0%,rgba(30,32,45,.95) 30%,rgba(40,40,60,.6) 42%,rgba(160,150,210,0) 52%)"></div>
    <div class="a" style="left:760px;top:10px;width:60px;height:50px;background:radial-gradient(ellipse at center,rgba(220,235,250,.5),rgba(70,130,220,.3) 40%,rgba(160,150,210,0) 70%)"></div>
    <div class="a" style="left:1px;top:34px;width:632px;height:36px;background:linear-gradient(180deg,rgba(236,236,242,0) 0px,rgba(236,236,242,.85) 5px,rgba(238,238,244,.92) 30px,rgba(240,200,180,.8) 36px);-webkit-mask-image:linear-gradient(90deg,#000 600px,transparent 632px)"></div>
    <div class="a" style="left:1px;top:69px;width:600px;height:9px;background:linear-gradient(90deg,rgba(242,150,95,.85),rgba(240,150,100,.8) 95%,rgba(240,150,100,0))"></div>
    <div class="a" style="left:1px;top:77px;width:7px;height:134px;background:linear-gradient(90deg,#e0a080,#f0b898 50%,#d89878)"></div>
    <div class="a" style="left:1px;top:210px;width:7px;height:150px;background:linear-gradient(90deg,#b8bcc4,#e8ecf2 50%,#c4c8d0)"></div>
    <div class="a" style="left:1px;top:351px;width:630px;height:9px;background:linear-gradient(180deg,#d4d8e0,#e4e8f0 40%,#c0c4cc);-webkit-mask-image:linear-gradient(90deg,#000 600px,transparent 630px)"></div>
  </div>
  <!-- caption buttons -->
  <div class="a" style="left:799px;top:0px;width:138px;height:26px;border:1px solid rgba(60,50,90,.7);border-top:none;border-radius:0 0 5px 5px;background:linear-gradient(180deg,rgba(255,255,255,.25),rgba(255,255,255,.05))"></div>
  <div class="a" style="left:837px;top:0;width:1px;height:25px;background:rgba(60,50,90,.6)"></div>
  <div class="a" style="left:873px;top:0;width:1px;height:25px;background:rgba(60,50,90,.6)"></div>
  <div class="a" style="left:812px;top:14px;width:18px;height:6px;background:#f0f0f0;border:1px solid #555;border-radius:1px"></div>
  <div class="a" style="left:845px;top:5px;width:19px;height:16px;border:3px solid #eee;outline:1px solid #555;background:rgba(120,140,170,.5)"></div>
  <svg style="left:893px;top:5px" width="26" height="18" viewBox="0 0 26 18"><path d="M3 1 L8 1 L13 6 L18 1 L23 1 L16 9 L23 17 L18 17 L13 12 L8 17 L3 17 L10 9Z" fill="#eee" stroke="#444" stroke-width="1" stroke-linejoin="round"/></svg>
  <!-- nav buttons -->
  <div class="a" style="left:6px;top:41px;width:80px;height:34px;border-radius:17px;background:rgba(210,215,235,.35)"></div>
  <div class="a" style="left:13px;top:44px;width:30px;height:30px;border-radius:50%;border:1px solid #333;background:radial-gradient(circle at 50% 35%,#f4f6fa,#c8d0dc 70%,#b0b8c8)"></div>
  <div class="a" style="left:49px;top:44px;width:30px;height:30px;border-radius:50%;border:1px solid #333;background:radial-gradient(circle at 50% 35%,#f4f6fa,#c8d0dc 70%,#b0b8c8)"></div>
  <svg style="left:18px;top:50px" width="20" height="18" viewBox="0 0 20 18"><path d="M2 9 L9 2 L9 6 L17 6 L17 12 L9 12 L9 16Z" fill="#e6e8ee" stroke="#b0b4c0" stroke-width="1"/></svg>
  <svg style="left:54px;top:50px" width="20" height="18" viewBox="0 0 20 18"><path d="M18 9 L11 2 L11 6 L3 6 L3 12 L11 12 L11 16Z" fill="#e6e8ee" stroke="#b0b4c0" stroke-width="1"/></svg>
  <svg style="left:82px;top:55px" width="10" height="7" viewBox="0 0 10 7"><path d="M1 1 L9 1 L5 6Z" fill="#c8cce0" stroke="#8890a8" stroke-width=".6"/></svg>
  <!-- address bar -->
  <div class="a" style="left:97px;top:43px;width:590px;height:26px;background:linear-gradient(180deg,rgba(255,255,255,.92),rgba(246,246,250,.9));border:1px solid #6a6488;border-radius:2px"></div>
  <div class="a" style="left:657px;top:44px;width:1px;height:24px;background:#7a7890"></div>
  <svg style="left:100px;top:44px" width="22" height="24" viewBox="0 0 22 24"><path d="M8 5 L13 3 L13 18 L8 20Z" fill="#e8c860" stroke="#c0a040" stroke-width=".5"/><path d="M13 3 L17 4 L18 17 L13 18Z" fill="#f4dc88" stroke="#c8aa50" stroke-width=".5"/><path d="M1 18 L5 20 M15 21 L21 22" stroke="#b8c0c8" stroke-width="1.6"/><path d="M4 19 Q8 16 12 19 L11 22 Q7 21 4 20Z" fill="#20c040"/></svg>
  <svg style="left:128px;top:50px" width="8" height="12" viewBox="0 0 8 12"><path d="M2 2 L6 6 L2 10Z" fill="#111"/></svg>
  <svg style="left:211px;top:50px" width="8" height="12" viewBox="0 0 8 12"><path d="M2 2 L6 6 L2 10Z" fill="#111"/></svg>
  <svg style="left:328px;top:50px" width="8" height="12" viewBox="0 0 8 12"><path d="M2 2 L6 6 L2 10Z" fill="#111"/></svg>
  <div class="t" style="left:145px;top:48px;font-size:14.5px;color:#3c3c3c">Network</div>
  <div class="t" style="left:228px;top:48px;font-size:14.5px;color:#3c3c3c">192.168.1.102</div>
  <div class="t" style="left:344px;top:48px;font-size:14.5px;color:#3c3c3c">share</div>
  <svg style="left:642px;top:52px" width="12" height="8" viewBox="0 0 12 8"><path d="M1 1 L11 1 L6 7Z" fill="#0a1a4a"/></svg>
  <div class="a" style="left:658px;top:44px;width:28px;height:24px;background:rgba(225,230,245,.6)"></div>
  <svg style="left:661px;top:47px" width="22" height="18" viewBox="0 0 22 18"><path d="M3 8 L9 3 L9 6 L15 6 L15 10 L9 10 L9 13Z" fill="#2a6ac8"/><path d="M19 10 L13 15 L13 12 L8 12 L8 9 L13 9 L13 6Z" fill="#2a80e0" transform="translate(1,1)"/></svg>
  <!-- search -->
  <div class="a" style="left:694px;top:43px;width:241px;height:26px;background:linear-gradient(180deg,rgba(240,238,248,.92),rgba(228,224,240,.9));border:1px solid #8a84a8;border-radius:2px"></div>
  <div class="t" style="left:703px;top:50px;font-size:14.5px;font-style:italic;color:#6a6a72">Search share</div>
  <svg style="left:910px;top:48px" width="18" height="18" viewBox="0 0 18 18"><circle cx="11" cy="7" r="4.6" fill="none" stroke="#1e5aa8" stroke-width="2"/><path d="M7.5 10.5 L2.5 15.5" stroke="#1e3a78" stroke-width="2.4" stroke-linecap="round"/></svg>
  <!-- inner panel -->
  <div class="a" style="left:8px;top:77px;width:930px;height:275px;background:#fcfcfc;border:1px solid #4a4660;border-bottom-color:#9a98b0"></div>
  <div class="a" style="left:9px;top:78px;width:928px;height:38px;background:linear-gradient(180deg,#f9fbfe 0%,#f1f5fb 45%,#e4ecf6 50%,#dbe5f2 100%);border-bottom:1px solid #a8bcd4"></div>
  <div class="t" style="left:31px;top:91px;font-size:14.5px;color:#1e395b">Organize</div>
  <svg style="left:96px;top:95px" width="9" height="6" viewBox="0 0 9 6"><path d="M0 0 L9 0 L4.5 5Z" fill="#1e2a4a"/></svg>
  <svg style="left:141px;top:86px" width="21" height="22" viewBox="0 0 21 22"><path d="M1 2 L19 2 Q20 8 19 21 L1 21Z" fill="#f0b030"/><path d="M1 2 L7 2 L6 21 L1 21Z" fill="#2a4a5a"/><path d="M2 7 Q6 3 10 5 Q13 3 16 4 M3 9 Q7 6 11 7" stroke="#e8eef0" stroke-width="1.2" fill="none"/><path d="M11 11 Q15 10 13 14 Q10 18 16 17" stroke="#f8e8c0" stroke-width="1.8" fill="none"/></svg>
  <div class="t" style="left:167px;top:91px;font-size:14.5px;color:#1e395b">Open</div>
  <svg style="left:213px;top:95px" width="9" height="6" viewBox="0 0 9 6"><path d="M0 0 L9 0 L4.5 5Z" fill="#1e2a4a"/></svg>
  <div class="t" style="left:260px;top:91px;font-size:14.5px;color:#1e395b">Print</div>
  <div class="t" style="left:326px;top:91px;font-size:14.5px;color:#1e395b">New folder</div>
  <svg style="left:784px;top:89px" width="20" height="18" viewBox="0 0 20 18"><g fill="#7a8aa0"><rect x="1" y="1" width="4" height="2" fill="#e0a020"/><rect x="1" y="5" width="4" height="2" fill="#50a050"/><rect x="1" y="9" width="4" height="2" fill="#d04040"/><rect x="1" y="13" width="4" height="2" fill="#4070c0"/><rect x="7" y="1" width="4" height="1.6"/><rect x="13" y="1" width="4" height="1.6"/><rect x="7" y="5" width="4" height="1.6"/><rect x="13" y="5" width="4" height="1.6"/><rect x="7" y="9" width="4" height="1.6"/><rect x="13" y="9" width="4" height="1.6"/><rect x="7" y="13" width="4" height="1.6"/><rect x="13" y="13" width="4" height="1.6"/></g></svg>
  <svg style="left:814px;top:95px" width="9" height="6" viewBox="0 0 9 6"><path d="M0 0 L9 0 L4.5 5Z" fill="#1e2a4a"/></svg>
  <div class="a" style="left:851px;top:88px;width:20px;height:19px;background:#fff;border:1px solid #8a9ab0"></div>
  <div class="a" style="left:864px;top:89px;width:6px;height:17px;background:linear-gradient(90deg,#5ab0e0,#a0d4f0)"></div>
  <div class="a" style="left:852px;top:89px;width:12px;height:2px;background:#d0dce8"></div>
  <div class="a" style="left:897px;top:87px;width:21px;height:21px;border-radius:50%;background:radial-gradient(circle at 45% 35%,#6a8ae8,#1a3ab0 60%,#0a2080);border:1px solid #7a7a8a"></div>
  <div class="t" style="left:902px;top:90px;font-size:15px;font-weight:bold;color:#fff">?</div>
  <!-- nav pane -->
  <div class="a" style="left:9px;top:117px;width:293px;height:234px;background:#fcfcfc"></div>
  <div class="a" style="left:281px;top:117px;width:21px;height:234px;background:#f0f0f0;border-left:1px solid #e4e4e4"></div>
  <svg style="left:284px;top:121px" width="14" height="10" viewBox="0 0 14 10"><path d="M2 8 L7 3 L12 8Z" fill="#333"/></svg>
  <svg style="left:284px;top:335px" width="14" height="10" viewBox="0 0 14 10"><path d="M2 2 L7 7 L12 2Z" fill="#333"/></svg>
  <div class="a" style="left:282px;top:165px;width:19px;height:59px;background:linear-gradient(90deg,#f2f2f2,#dcdcdc);border:1px solid #999;border-radius:2px"></div>
  <div class="a" style="left:287px;top:191px;width:9px;height:7px;border-top:1px solid #666;border-bottom:1px solid #666"></div>
  <div class="a" style="left:287px;top:194px;width:9px;height:1px;background:#666"></div>
  <div class="a" style="left:302px;top:117px;width:1px;height:234px;background:#e6e6e6"></div>
  <svg style="left:43px;top:122px" width="20" height="18" viewBox="0 0 20 18"><g fill="#1a8ae8"><path d="M6 2 L10 5 L6 8 L2 5Z"/><path d="M14 2 L18 5 L14 8 L10 5Z"/><path d="M6 8 L10 11 L6 14 L2 11Z" transform="translate(0,-2)"/><path d="M14 8 L18 11 L14 14 L10 11Z" transform="translate(0,-2)"/><path d="M10 12 L13 14 L10 16 L7 14Z"/></g></svg>
  <div class="t" style="left:68px;top:124px;font-size:14.5px;color:#111">Dropbox</div>
  <svg style="left:42px;top:149px" width="20" height="18" viewBox="0 0 20 18"><path d="M1 2 L8 2 L10 4 L19 4 L19 17 L1 17Z" fill="#1a3a8a"/><path d="M5 13 Q4 9 8 10 Q9 6 13 8 Q16 8 15 12 Q17 13 15 14 L6 14Z" fill="none" stroke="#fff" stroke-width="1.2"/></svg>
  <div class="t" style="left:68px;top:151px;font-size:14.5px;color:#111">GMX MediaCenter</div>
  <svg style="left:42px;top:175px" width="20" height="20" viewBox="0 0 20 20"><path d="M1 2 L7 2 L9 4 L15 4 L15 17 L1 17Z" fill="#f0d070" stroke="#c0a040" stroke-width=".7"/><path d="M9 12 L13 6 L17 12 L15 16 L7 16Z" fill="#20a040"/><path d="M13 6 L17 12 L19 12 L15 6Z" fill="#f0c020"/><path d="M7 16 L15 16 L17 12 L9 12Z" fill="#3070e0"/></svg>
  <div class="t" style="left:68px;top:178px;font-size:14.5px;color:#111">Google Drive</div>
  <svg style="left:42px;top:202px" width="20" height="20" viewBox="0 0 20 20"><circle cx="7" cy="7" r="5" fill="#d8e4ec" stroke="#889" stroke-width=".8"/><rect x="5" y="9" width="12" height="8" fill="#4aa0d8" stroke="#555" stroke-width=".8"/><path d="M3 19 L18 19" stroke="#444" stroke-width="1.5"/></svg>
  <div class="t" style="left:68px;top:205px;font-size:14.5px;color:#111">Recent Places</div>
  <svg style="left:32px;top:255px" width="22" height="20" viewBox="0 0 22 20"><path d="M1 3 L8 3 L10 5 L20 5 L20 18 L1 18Z" fill="#f0cc60" stroke="#c09a30" stroke-width=".8"/><rect x="5" y="1" width="10" height="8" fill="#fff" stroke="#aaa" stroke-width=".5"/><rect x="1" y="9" width="19" height="9" fill="#f4d478"/><rect x="7" y="12" width="7" height="5" fill="#5aaae0"/></svg>
  <div class="t" style="left:58px;top:259px;font-size:14.5px;color:#111">Libraries</div>
  <svg style="left:42px;top:283px" width="20" height="20" viewBox="0 0 20 20"><path d="M3 1 L13 1 L16 4 L16 16 L3 16Z" fill="#f4f8fc" stroke="#8ab0d0" stroke-width=".8"/><path d="M1 15 L11 19 L19 15 L11 12Z" fill="#7ab8e8"/></svg>
  <div class="t" style="left:68px;top:285px;font-size:14.5px;color:#111">Documents</div>
  <svg style="left:42px;top:309px" width="20" height="20" viewBox="0 0 20 20"><path d="M9 2 L9 12 M9 2 Q13 4 13 8" stroke="#2a6ab0" stroke-width="1.6" fill="none"/><ellipse cx="7" cy="12" rx="3" ry="2.2" fill="#2a6ab0"/><path d="M1 15 L11 19 L19 15 L11 12Z" fill="#7ab8e8"/></svg>
  <div class="t" style="left:68px;top:312px;font-size:14.5px;color:#111">Music</div>
  <svg style="left:42px;top:336px" width="20" height="15" viewBox="0 0 20 15"><rect x="3" y="2" width="12" height="10" fill="#fff" stroke="#6a8ab0" stroke-width=".8"/><path d="M1 12 L11 15 L19 12 L11 9Z" fill="#7ab8e8"/></svg>
  <div class="a" style="left:9px;top:117px;width:272px;height:234px;overflow:hidden"><div class="t" style="left:59px;top:222px;font-size:14.5px;color:#111">Pictures</div></div>
  <!-- content -->
  <div class="a" style="left:303px;top:117px;width:634px;height:234px;background:#fcfcfc"></div>
  <svg style="left:476px;top:118px" width="10" height="6" viewBox="0 0 10 6"><path d="M1 5 L5 1 L9 5Z" fill="#8ab4d4" stroke="#5a90c0" stroke-width=".6"/></svg>
  <div class="a" style="left:644px;top:119px;width:1px;height:30px;background:linear-gradient(#fcfcfc,#e4e8ee,#fcfcfc)"></div>
  <div class="a" style="left:794px;top:119px;width:1px;height:30px;background:linear-gradient(#fcfcfc,#e4e8ee,#fcfcfc)"></div>
  <div class="t" style="left:327px;top:127px;font-size:14.5px;color:#4c607a">Name</div>
  <div class="t" style="left:653px;top:127px;font-size:14.5px;color:#4c607a">Date modified</div>
  <div class="t" style="left:803px;top:127px;font-size:14.5px;color:#4c607a">Type</div>

  <div class="a" style="left:323px;top:184px;width:620px;height:27px;background:linear-gradient(180deg,#f6f6f6,#e8e8e8);border:1px solid #d6d6d6;border-radius:3px"></div>
  <svg style="left:320px;top:157px" width="32" height="54" viewBox="0 0 32 54"><g transform="translate(0,0)"><path d="M16.5 3.5 L23.5 3.5 L27.5 7.5 L27.5 22.5 L16.5 22.5Z" fill="#f2f4f6" stroke="#8a8a8a" stroke-width=".9"/><path d="M23.5 3.5 L27.5 7.5 L23.5 7.5Z" fill="#3a70b8"/><path d="M17.5 12.8 L26 12.8 M17.5 16 L24 16 M17.5 19.3 L26 19.3" stroke="#5a7a9a" stroke-width="1.1"/><path d="M11.5 10 L15.8 10 L15.8 22.5 L11.5 22.5Z" fill="#2a4a6a"/><path d="M12.3 10 L13.3 10 L13.3 22 L12.3 22Z" fill="#6a8aaa"/><path d="M8.5 12 Q12 8 17 7 Q21 5.5 23 3.8" stroke="#b8bcc4" stroke-width="1.6" fill="none"/><path d="M10 8.5 Q13 5.5 17 4.8 Q20 4 22 3.2" stroke="#1e2a3a" stroke-width="1" fill="none"/><path d="M9 10 Q12 7 16 6.3" stroke="#8a9098" stroke-width=".8" fill="none"/></g><g transform="translate(0,27)"><path d="M16.5 3.5 L23.5 3.5 L27.5 7.5 L27.5 22.5 L16.5 22.5Z" fill="#f2f4f6" stroke="#8a8a8a" stroke-width=".9"/><path d="M23.5 3.5 L27.5 7.5 L23.5 7.5Z" fill="#f0b010"/><path d="M19 13 Q23 11 24 13.5 Q24.5 16 21 17.5 Q18 19 20 21 Q23 22 26 19.5" stroke="#f0a810" stroke-width="1.8" fill="none" stroke-linecap="round"/><path d="M11.5 10 L15.8 10 L15.8 22.5 L11.5 22.5Z" fill="#2a4a6a"/><path d="M12.3 10 L13.3 10 L13.3 22 L12.3 22Z" fill="#6a8aaa"/><path d="M8.5 12 Q12 8 17 7 Q21 5.5 23 3.8" stroke="#b8bcc4" stroke-width="1.6" fill="none"/><path d="M10 8.5 Q13 5.5 17 4.8 Q20 4 22 3.2" stroke="#1e2a3a" stroke-width="1" fill="none"/><path d="M9 10 Q12 7 16 6.3" stroke="#8a9098" stroke-width=".8" fill="none"/></g></svg>
  <div class="t" style="left:353px;top:164px;font-size:15px;color:#111">building01</div>
  <div class="t" style="left:653px;top:164px;font-size:14.5px;color:#6d6d6d">17-Aug-15 5:04 PM</div>
  <div class="t" style="left:803px;top:164px;font-size:14.5px;color:#6d6d6d">OpenDocument T...</div>

  <div class="t" style="left:353px;top:190px;font-size:15px;color:#111">firstdraw</div>
  <div class="t" style="left:653px;top:190px;font-size:14.5px;color:#6d6d6d">22-Aug-15 12:25 P...</div>
  <div class="t" style="left:803px;top:190px;font-size:14.5px;color:#6d6d6d">OpenDocument D...</div>
  <!-- h scrollbar -->
  <div class="a" style="left:303px;top:330px;width:634px;height:21px;background:#efefef;border-top:1px solid #e0e0e0"></div>
  <svg style="left:311px;top:334px" width="10" height="14" viewBox="0 0 10 14"><path d="M8 2 L3 7 L8 12Z" fill="#333"/></svg>
  <svg style="left:921px;top:334px" width="10" height="14" viewBox="0 0 10 14"><path d="M2 2 L7 7 L2 12Z" fill="#333"/></svg>
  <div class="a" style="left:327px;top:331px;width:492px;height:19px;background:linear-gradient(180deg,#f4f4f4,#e6e6e6 50%,#d8d8d8 51%,#dcdcdc);border:1px solid #959595;border-radius:2px"></div>
  <div class="a" style="left:568px;top:336px;width:8px;height:9px;border-left:1px solid #555;border-right:1px solid #555"></div>
  <div class="a" style="left:571px;top:336px;width:1px;height:9px;background:#555"></div>
</div>
<!-- ===== OpenOffice window ===== -->
<div class="a" style="left:948px;top:941px;width:332px;height:11px;background:linear-gradient(180deg,rgba(50,30,70,.65),rgba(60,40,90,0))"></div>
<div id="ooo" class="a" style="left:701px;top:365px;width:579px;height:576px;overflow:hidden">
  <div class="a" style="left:0;top:0;width:590px;height:576px;border:1px solid #2e2c40;border-radius:8px 8px 0 0;background:linear-gradient(90deg,#dfe8f4 0px,#eef3fa 100px,#e2eaf6 235px,#b0b8e2 258px,#9a9cd8 290px,#9696d6 579px);overflow:hidden">
    <div class="a" style="left:0;top:36px;width:590px;height:540px;background:linear-gradient(180deg,rgba(190,200,235,0),rgba(170,180,225,.5))"></div>
    <div class="a" style="left:1px;top:30px;width:6px;height:480px;background:linear-gradient(90deg,#c8d4ea,#eef2fa 50%,#d4def0)"></div>
    <div class="a" style="left:1px;top:480px;width:6px;height:96px;background:linear-gradient(180deg,rgba(220,180,160,0),rgba(220,150,120,.9))"></div>
    <div class="a" style="left:0;top:566px;width:260px;height:10px;background:linear-gradient(90deg,#d8a088,#c89080 85%,rgba(200,140,120,0))"></div>
    <div class="a" style="left:235px;top:566px;width:355px;height:10px;background:linear-gradient(90deg,rgba(160,190,220,0),#a8c4e0 8%,#9aa8dc 20%,#8a94d4 35%,#8c90d2)"></div>
    <div class="a" style="left:1px;top:1px;width:588px;height:1px;background:rgba(255,255,255,.6)"></div>
  </div>
  <svg style="left:10px;top:7px" width="19" height="20" viewBox="8 3 20 20"><path d="M16.5 3.5 L23.5 3.5 L27.5 7.5 L27.5 22.5 L16.5 22.5Z" fill="#f2f4f6" stroke="#8a8a8a" stroke-width=".9"/><path d="M23.5 3.5 L27.5 7.5 L23.5 7.5Z" fill="#f0b010"/><path d="M19 13 Q23 11 24 13.5 Q24.5 16 21 17.5 Q18 19 20 21 Q23 22 26 19.5" stroke="#f0a810" stroke-width="1.8" fill="none" stroke-linecap="round"/><path d="M11.5 10 L15.8 10 L15.8 22.5 L11.5 22.5Z" fill="#2a4a6a"/><path d="M12.3 10 L13.3 10 L13.3 22 L12.3 22Z" fill="#6a8aaa"/><path d="M8.5 12 Q12 8 17 7 Q21 5.5 23 3.8" stroke="#b8bcc4" stroke-width="1.6" fill="none"/><path d="M10 8.5 Q13 5.5 17 4.8 Q20 4 22 3.2" stroke="#1e2a3a" stroke-width="1" fill="none"/><path d="M9 10 Q12 7 16 6.3" stroke="#8a9098" stroke-width=".8" fill="none"/></svg>
  <div class="t" style="left:33px;top:11px;font-size:15px;color:#000">firstdraw.odg - OpenOffice Draw</div>
  <!-- caption buttons -->
  <div class="a" style="left:441px;top:0;width:72px;height:26px;border:1px solid #4a4870;border-top:none;border-right:none;border-radius:0 0 0 5px;background:linear-gradient(180deg,rgba(235,235,250,.6),rgba(180,180,220,.4) 50%,rgba(150,150,200,.5))"></div>
  <div class="a" style="left:476px;top:0;width:1px;height:25px;background:#4a4870"></div>
  <div class="a" style="left:512px;top:0;width:65px;height:26px;border:1px solid #5a1a10;border-top:none;border-radius:0 0 5px 0;background:linear-gradient(180deg,#e8a8a0 0%,#d87868 40%,#c83820 55%,#d05838 100%)"></div>
  <div class="a" style="left:450px;top:13px;width:18px;height:6px;background:#f4f4f4;border:1px solid #4a4a5a;border-radius:1px"></div>
  <div class="a" style="left:485px;top:5px;width:19px;height:15px;border:3px solid #f0f0f0;outline:1px solid #4a4a5a;background:rgba(130,140,180,.6)"></div>
  <svg style="left:531px;top:4px" width="26" height="18" viewBox="0 0 26 18"><path d="M3 1 L8 1 L13 6 L18 1 L23 1 L16 9 L23 17 L18 17 L13 12 L8 17 L3 17 L10 9Z" fill="#f0f0f0" stroke="#3a2a2a" stroke-width="1" stroke-linejoin="round"/></svg>
  <!-- client -->
  <div class="a" style="left:7px;top:36px;width:570px;height:531px;background:#f0f0f0;border:1px solid #3a3a50;border-right-color:#506090"></div>
  <!-- menubar -->
  <div class="a" style="left:8px;top:37px;width:568px;height:27px;background:linear-gradient(180deg,#f0f3fa,#e2e7f4 50%,#d8dff0);border-bottom:1px solid #c0c8dc"></div>
  <div class="t" style="left:18px;top:44px;font-size:14.5px;color:#111"><u>F</u>ile</div>
  <div class="t" style="left:61px;top:44px;font-size:14.5px;color:#111"><u>E</u>dit</div>
  <div class="t" style="left:107px;top:44px;font-size:14.5px;color:#111"><u>V</u>iew</div>
  <div class="t" style="left:159px;top:44px;font-size:14.5px;color:#111"><u>I</u>nsert</div>
  <div class="t" style="left:215px;top:44px;font-size:14.5px;color:#111">F<u>o</u>rmat</div>
  <div class="t" style="left:282px;top:44px;font-size:14.5px;color:#111"><u>T</u>ools</div>
  <div class="t" style="left:338px;top:44px;font-size:14.5px;color:#111"><u>M</u>odify</div>
  <div class="t" style="left:405px;top:44px;font-size:14.5px;color:#111"><u>W</u>indow</div>
  <div class="t" style="left:480px;top:44px;font-size:14.5px;color:#111"><u>H</u>elp</div>
  <svg style="left:520px;top:42px" width="18" height="16" viewBox="0 0 18 16"><path d="M6 1 L12 1 L12 6 L16 6 L9 12 L2 6 L6 6Z" fill="#40b040" stroke="#207020" stroke-width=".8"/><path d="M1 11 L17 11 L17 15 L1 15Z" fill="#6a9ad0" stroke="#345" stroke-width=".6"/></svg>
  <svg style="left:559px;top:45px" width="12" height="12" viewBox="0 0 12 12"><path d="M2 2 L10 10 M10 2 L2 10" stroke="#666" stroke-width="1.8"/></svg>
  <!-- toolbar 1 -->
  <div class="a" style="left:8px;top:64px;width:568px;height:30px;background:linear-gradient(180deg,#e4e9f5,#d6ddef 60%,#cdd5ea);border-bottom:1px solid #b8c0d4"></div>
  <div class="a" style="left:564px;top:66px;width:11px;height:26px;background:linear-gradient(180deg,#e8ecf4,#a8a8b0)"></div>
  <svg style="left:564px;top:68px" width="11" height="24" viewBox="0 0 11 24"><path d="M1 2 L4 5 L1 8 M5 2 L8 5 L5 8" stroke="#000" stroke-width="1.2" fill="none"/><path d="M2 17 L9 17 L5.5 21Z" fill="#111"/></svg>
  <div class="a" style="left:13px;top:69px;width:2px;height:20px;border-left:2px dotted #7a8090"></div>
  <div class="a" style="left:150px;top:67px;width:25px;height:25px;background:linear-gradient(180deg,#d6dae4,#c4c8d4);border:1px solid #5a5e6e;border-radius:3px"></div>
  <svg style="left:0;top:64px" width="570" height="30" viewBox="0 0 570 30">
    <svg x="22" y="5" width="18" height="19" viewBox="8 3 20 20"><path d="M16.5 3.5 L23.5 3.5 L27.5 7.5 L27.5 22.5 L16.5 22.5Z" fill="#f2f4f6" stroke="#8a8a8a" stroke-width=".9"/><path d="M23.5 3.5 L27.5 7.5 L23.5 7.5Z" fill="#f0b010"/><path d="M19 13 Q23 11 24 13.5 Q24.5 16 21 17.5 Q18 19 20 21 Q23 22 26 19.5" stroke="#f0a810" stroke-width="1.8" fill="none" stroke-linecap="round"/><path d="M11.5 10 L15.8 10 L15.8 22.5 L11.5 22.5Z" fill="#2a4a6a"/><path d="M12.3 10 L13.3 10 L13.3 22 L12.3 22Z" fill="#6a8aaa"/><path d="M8.5 12 Q12 8 17 7 Q21 5.5 23 3.8" stroke="#b8bcc4" stroke-width="1.6" fill="none"/><path d="M10 8.5 Q13 5.5 17 4.8 Q20 4 22 3.2" stroke="#1e2a3a" stroke-width="1" fill="none"/><path d="M9 10 Q12 7 16 6.3" stroke="#8a9098" stroke-width=".8" fill="none"/></svg>
    <path d="M46 13 L52 13 L49 16Z" fill="#111"/>
    <g transform="translate(59,5)"><path d="M1 5 L6 5 L8 7 L15 7 L15 17 L1 17Z" fill="#f0b030" stroke="#a06010" stroke-width=".9"/><path d="M3 10 L17 10 L15 17 L1 17Z" fill="#f8c848" stroke="#a06010" stroke-width=".9"/><path d="M10 8 L15 2 M12 2 L15 2 L15 5" stroke="#e04020" stroke-width="1.8" fill="none"/></g>
    <path d="M82 13 L88 13 L85 16Z" fill="#111"/>
    <g transform="translate(97,7)"><rect x="1" y="1" width="14" height="14" rx="1" fill="#c8c8d0" stroke="#999"/><rect x="4" y="1" width="8" height="5" fill="#e8e8ec"/><rect x="4" y="9" width="8" height="6" fill="#e0e0e4"/></g>
    <g transform="translate(121,8)"><rect x="1" y="2" width="12" height="9" fill="#fff" stroke="#888" stroke-width=".9"/><path d="M1 2 L7 7 L13 2" stroke="#888" fill="none" stroke-width=".9"/><path d="M10 9 L15 9 L15 7 L18 10.5 L15 14 L15 12 L10 12Z" fill="#f0a020" stroke="#a06010" stroke-width=".6"/></g>
    <path d="M145 6 L145 24" stroke="#aab0c0"/>
    <g transform="translate(154,6)"><rect x="2" y="2" width="13" height="15" fill="#fff" stroke="#5a6a8a" stroke-width=".9"/><path d="M4 6 L10 6 M4 9 L10 9 M4 12 L8 12" stroke="#3a7ac0"/><path d="M7 14 L15 4 L17 6 L9 16 L6 17Z" fill="#f0c040" stroke="#8a5010" stroke-width=".7"/></g>
    <path d="M181 6 L181 24" stroke="#aab0c0"/>
    <g transform="translate(189,6)"><path d="M2 1 L11 1 L14 4 L14 18 L2 18Z" fill="#fff" stroke="#888" stroke-width=".8"/><path d="M4 5 L10 5 M4 8 L9 8" stroke="#3a7ac0"/><rect x="2" y="11" width="12" height="6" fill="#d82020"/><text x="8" y="16.3" font-size="5" font-weight="bold" fill="#fff" text-anchor="middle" font-family="Liberation Sans">PDF</text></g>
    <g transform="translate(212,6)"><rect x="4" y="1" width="10" height="7" fill="#fff" stroke="#555" stroke-width=".8"/><path d="M6 4 L12 4" stroke="#3a7ac0"/><rect x="1" y="8" width="16" height="8" rx="1" fill="#7a7a7a" stroke="#333" stroke-width=".8"/><rect x="2" y="14" width="14" height="3" fill="#444"/><circle cx="14" cy="11" r="1" fill="#3c3"/></g>
    <path d="M236 6 L236 24" stroke="#aab0c0"/>
    <g transform="translate(244,5)"><text x="9" y="8" font-size="7" font-weight="bold" fill="#1a3a6a" text-anchor="middle" font-family="Liberation Sans">ABC</text><path d="M4 12 L8 17 L16 8" stroke="#2a7ae0" stroke-width="2" fill="none"/></g>
    <g transform="translate(268,5)"><text x="9" y="10" font-size="7" font-weight="bold" fill="#1a3a6a" text-anchor="middle" font-family="Liberation Sans">ABC</text><path d="M1 15 Q3 12 5 15 Q7 18 9 15 Q11 12 13 15 Q15 18 17 15" stroke="#e02020" stroke-width="1.8" fill="none"/></g>
    <path d="M294 6 L294 24" stroke="#aab0c0"/>
    <g transform="translate(302,6)" stroke="#b0b4bc" fill="none" stroke-width="1.3"><path d="M2 2 L14 16 M14 2 L2 16"/><circle cx="3" cy="16" r="2"/><circle cx="14" cy="16" r="2"/></g>
    <g transform="translate(327,6)"><path d="M1 1 L8 1 L10 3 L10 12 L1 12Z" fill="#fff" stroke="#555" stroke-width=".8"/><path d="M6 6 L13 6 L15 8 L15 18 L6 18Z" fill="#fff" stroke="#555" stroke-width=".8"/><path d="M3 5 L7 5 M8 10 L13 10 M8 13 L13 13" stroke="#3a7ac0"/></g>
    <g transform="translate(352,6)" stroke="#b8bcc4" fill="#e4e6ea" stroke-width=".9"><rect x="1" y="4" width="13" height="14" rx="1"/><rect x="4" y="1" width="7" height="4"/><rect x="6" y="9" width="9" height="9" fill="#f4f4f6"/></g>
    <g transform="translate(377,6)" stroke="#b8bcc4" fill="#e0e2e6" stroke-width=".9"><path d="M10 2 L16 6 L10 12 L7 9Z"/><path d="M7 9 L2 17 L5 17 L10 12Z"/></g>
    <path d="M402 6 L402 24" stroke="#aab0c0"/>
    <g transform="translate(409,6)" stroke="#b8bcc4" fill="none" stroke-width="2"><path d="M4 8 Q4 2 10 3 Q16 5 14 11 Q12 16 6 15"/><path d="M1 5 L5 9 L8 4" stroke-width="1.4"/></g>
    <path d="M434 13 L440 13 L437 16Z" fill="#a0a4ac"/>
    <g transform="translate(446,6)" stroke="#b8bcc4" fill="none" stroke-width="2"><path d="M14 8 Q14 2 8 3 Q2 5 4 11 Q6 16 12 15"/><path d="M17 5 L13 9 L10 4" stroke-width="1.4"/></g>
    <path d="M470 13 L476 13 L473 16Z" fill="#a0a4ac"/>
    <path d="M482 6 L482 24" stroke="#aab0c0"/>
    <g transform="translate(491,6)"><path d="M1 1 L1 17 L17 17" stroke="#333" fill="none"/><rect x="3" y="7" width="3" height="9" fill="#2a6ac0"/><rect x="7" y="2" width="3" height="14" fill="#e04020"/><rect x="11" y="9" width="3" height="7" fill="#f0a020"/></g>
    <g transform="translate(516,6)"><circle cx="8.5" cy="9" r="8" fill="#2a8a4a" stroke="#333" stroke-width=".8"/><path d="M3 5 Q8 3 10 8 Q12 12 6 14" fill="#5ab0e0"/><rect x="3" y="8" width="11" height="4" rx="2" fill="none" stroke="#eee" stroke-width="1.5"/></g>
  </svg>
  <!-- toolbar 2 -->
  <div class="a" style="left:8px;top:94px;width:568px;height:33px;background:linear-gradient(180deg,#e6eaf6,#d8dff0 60%,#ccd4ea);border-bottom:1px solid #a4aab8"></div>
  <div class="a" style="left:564px;top:97px;width:11px;height:27px;background:linear-gradient(180deg,#e8ecf4,#a8a8b0)"></div>
  <svg style="left:564px;top:99px" width="11" height="24" viewBox="0 0 11 24"><path d="M1 2 L4 5 L1 8 M5 2 L8 5 L5 8" stroke="#000" stroke-width="1.2" fill="none"/><path d="M2 17 L9 17 L5.5 21Z" fill="#111"/></svg>
  <div class="a" style="left:13px;top:101px;width:2px;height:20px;border-left:2px dotted #7a8090"></div>
  <svg style="left:0;top:94px" width="130" height="33" viewBox="0 0 130 33">
    <g transform="translate(30,8)"><rect x="4" y="1" width="12" height="12" fill="#f0f0f0" stroke="#777" stroke-width=".8"/><rect x="1" y="4" width="11" height="12" fill="#e0e0e0" stroke="#555" stroke-width=".8"/><path d="M6.5 6 L6.5 14 M4 9 L9 9" stroke="#444"/></g>
    <path d="M54 8 L54 26" stroke="#b0b4c0"/>
    <g transform="translate(60,7)"><path d="M6 1 Q1 8 3 14 L9 14 Q11 8 6 1Z" fill="#f0c020" stroke="#806010" stroke-width=".8"/><rect x="2" y="14" width="8" height="3" fill="#4a8ac0"/></g>
    <g transform="translate(83,8)" stroke="#2a80e0" fill="none" stroke-width="1.5"><path d="M2 4 L16 4 M2 4 L5 1 M2 4 L5 7"/><path d="M2 12 L16 12 M7 12 L10 9 M7 12 L10 15 M11 12 L14 9 M11 12 L14 15"/></g>
    <path d="M106 14 L112 14 L109 17Z" fill="#111"/>
  </svg>
  <div class="a" style="left:123px;top:95px;width:109px;height:31px;background:#fff;border:1px solid #a8b0c0"></div>
  <div class="a" style="left:126px;top:111px;width:85px;height:2px;background:#555"></div>
  <div class="a" style="left:211px;top:97px;width:20px;height:27px;background:linear-gradient(180deg,#f4f4f4,#dcdcdc);border:1px solid #777"></div>
  <svg style="left:215px;top:107px" width="12" height="8" viewBox="0 0 12 8"><path d="M1 1 L11 1 L6 7Z" fill="#000"/></svg>
  <div class="a" style="left:240px;top:98px;width:82px;height:26px;background:#fff;border:1px solid #a8b0c0"></div>
  <div class="t" style="left:244px;top:104px;font-size:14.5px;color:#111">0.00 "</div>
  <div class="a" style="left:300px;top:100px;width:19px;height:22px;border:1px solid #b0b4c0;background:linear-gradient(180deg,#f4f4f8,#e0e4ec)"></div>
  <div class="a" style="left:301px;top:110px;width:17px;height:1px;background:#b0b4c0"></div>
  <svg style="left:304px;top:102px" width="12" height="18" viewBox="0 0 12 18"><path d="M2 6 L10 6 L6 2Z" fill="#3a6ad0"/><path d="M2 12 L10 12 L6 16Z" fill="#3a6ad0"/></svg>
  <div class="a" style="left:329px;top:97px;width:124px;height:29px;background:#fff;border:1px solid #a8b0c0"></div>
  <div class="a" style="left:333px;top:102px;width:42px;height:19px;background:#808080;border:1px solid #333"></div>
  <div class="t" style="left:380px;top:105px;font-size:14.5px;color:#111">Gray</div>
  <div class="a" style="left:431px;top:99px;width:20px;height:25px;background:linear-gradient(180deg,#f4f4f4,#dcdcdc);border:1px solid #777"></div>
  <svg style="left:435px;top:108px" width="12" height="8" viewBox="0 0 12 8"><path d="M1 1 L11 1 L6 7Z" fill="#000"/></svg>
  <svg style="left:465px;top:103px" width="20" height="20" viewBox="0 0 20 20"><path d="M3 7 L9 2 L15 9 L9 14Z" fill="#e8e8e8" stroke="#333" stroke-width="1"/><path d="M6 2 L9 5" stroke="#333"/><path d="M14 8 Q18 10 17 17" stroke="#2a80d0" stroke-width="2.4" fill="none"/></svg>
  <!-- ruler row -->
  <div class="a" style="left:8px;top:127px;width:501px;height:33px;background:#eef0f4"></div>
  <div class="a" style="left:14px;top:132px;width:22px;height:23px;background:#f2f2f2;border:1px solid #b0b0b0"></div>
  <svg style="left:16px;top:135px" width="20" height="17" viewBox="0 0 20 17"><path d="M1.5 3.5 L19 3.5 M4.5 1 L4.5 16" stroke="#000" stroke-width="1.1"/></svg>
  <div class="a" style="left:37px;top:132px;width:472px;height:23px;background:#fff;border-top:1px solid #c8c8c8;border-bottom:1px solid #c8c8c8"></div>
  <div class="a" style="left:37px;top:133px;width:70px;height:21px;background:#e6e6e6"></div>
  <div class="a" style="left:42px;top:160px;width:467px;height:2px;background:#111"></div>
  <div id="hruler" class="a" style="left:37px;top:132px;width:472px;height:23px;overflow:hidden;font-size:14.5px;color:#111"><div class="t" style="left:-4.1px;top:4px;width:24px;text-align:center">3</div><div class="a" style="left:12.6px;top:11.0px;width:1px;height:1px;background:#222"></div><div class="a" style="left:17.8px;top:10.0px;width:1px;height:3px;background:#222"></div><div class="a" style="left:23.0px;top:11.0px;width:1px;height:1px;background:#222"></div><div class="t" style="left:16.7px;top:4px;width:24px;text-align:center">2</div><div class="a" style="left:33.4px;top:11.0px;width:1px;height:1px;background:#222"></div><div class="a" style="left:38.6px;top:10.0px;width:1px;height:3px;background:#222"></div><div class="a" style="left:43.8px;top:11.0px;width:1px;height:1px;background:#222"></div><div class="t" style="left:37.5px;top:4px;width:24px;text-align:center">1</div><div class="a" style="left:54.2px;top:11.0px;width:1px;height:1px;background:#222"></div><div class="a" style="left:59.4px;top:10.0px;width:1px;height:3px;background:#222"></div><div class="a" style="left:64.6px;top:11.0px;width:1px;height:1px;background:#222"></div><div class="a" style="left:75.0px;top:11.0px;width:1px;height:1px;background:#222"></div><div class="a" style="left:80.2px;top:10.0px;width:1px;height:3px;background:#222"></div><div class="a" style="left:85.4px;top:11.0px;width:1px;height:1px;background:#222"></div><div class="t" style="left:79.1px;top:4px;width:24px;text-align:center">1</div><div class="a" style="left:95.8px;top:11.0px;width:1px;height:1px;background:#222"></div><div class="a" style="left:101.0px;top:10.0px;width:1px;height:3px;background:#222"></div><div class="a" style="left:106.2px;top:11.0px;width:1px;height:1px;background:#222"></div><div class="t" style="left:99.9px;top:4px;width:24px;text-align:center">2</div><div class="a" style="left:116.6px;top:11.0px;width:1px;height:1px;background:#222"></div><div class="a" style="left:121.8px;top:10.0px;width:1px;height:3px;background:#222"></div><div class="a" style="left:127.0px;top:11.0px;width:1px;height:1px;background:#222"></div><div class="t" style="left:120.7px;top:4px;width:24px;text-align:center">3</div><div class="a" style="left:137.4px;top:11.0px;width:1px;height:1px;background:#222"></div><div class="a" style="left:142.6px;top:10.0px;width:1px;height:3px;background:#222"></div><div class="a" style="left:147.8px;top:11.0px;width:1px;height:1px;background:#222"></div><div class="t" style="left:141.5px;top:4px;width:24px;text-align:center">4</div><div class="a" style="left:158.2px;top:11.0px;width:1px;height:1px;background:#222"></div><div class="a" style="left:163.4px;top:10.0px;width:1px;height:3px;background:#222"></div><div class="a" style="left:168.6px;top:11.0px;width:1px;height:1px;background:#222"></div><div class="t" style="left:162.3px;top:4px;width:24px;text-align:center">5</div><div class="a" style="left:179.0px;top:11.0px;width:1px;height:1px;background:#222"></div><div class="a" style="left:184.2px;top:10.0px;width:1px;height:3px;background:#222"></div><div class="a" style="left:189.4px;top:11.0px;width:1px;height:1px;background:#222"></div><div class="t" style="left:183.1px;top:4px;width:24px;text-align:center">6</div><div class="a" style="left:199.8px;top:11.0px;width:1px;height:1px;background:#222"></div><div class="a" style="left:205.0px;top:10.0px;width:1px;height:3px;background:#222"></div><div class="a" style="left:210.2px;top:11.0px;width:1px;height:1px;background:#222"></div><div class="t" style="left:203.9px;top:4px;width:24px;text-align:center">7</div><div class="a" style="left:220.6px;top:11.0px;width:1px;height:1px;background:#222"></div><div class="a" style="left:225.8px;top:10.0px;width:1px;height:3px;background:#222"></div><div class="a" style="left:231.0px;top:11.0px;width:1px;height:1px;background:#222"></div><div class="t" style="left:224.7px;top:4px;width:24px;text-align:center">8</div><div class="a" style="left:241.4px;top:11.0px;width:1px;height:1px;background:#222"></div><div class="a" style="left:246.6px;top:10.0px;width:1px;height:3px;background:#222"></div><div class="a" style="left:251.8px;top:11.0px;width:1px;height:1px;background:#222"></div><div class="t" style="left:245.5px;top:4px;width:24px;text-align:center">9</div><div class="a" style="left:262.2px;top:11.0px;width:1px;height:1px;background:#222"></div><div class="a" style="left:267.4px;top:10.0px;width:1px;height:3px;background:#222"></div><div class="a" style="left:272.6px;top:11.0px;width:1px;height:1px;background:#222"></div><div class="t" style="left:266.3px;top:4px;width:24px;text-align:center">10</div><div class="a" style="left:283.0px;top:11.0px;width:1px;height:1px;background:#222"></div><div class="a" style="left:288.2px;top:10.0px;width:1px;height:3px;background:#222"></div><div class="a" style="left:293.4px;top:11.0px;width:1px;height:1px;background:#222"></div><div class="t" style="left:287.1px;top:4px;width:24px;text-align:center">11</div><div class="a" style="left:303.8px;top:11.0px;width:1px;height:1px;background:#222"></div><div class="a" style="left:309.0px;top:10.0px;width:1px;height:3px;background:#222"></div><div class="a" style="left:314.2px;top:11.0px;width:1px;height:1px;background:#222"></div><div class="t" style="left:307.9px;top:4px;width:24px;text-align:center">12</div><div class="a" style="left:324.6px;top:11.0px;width:1px;height:1px;background:#222"></div><div class="a" style="left:329.8px;top:10.0px;width:1px;height:3px;background:#222"></div><div class="a" style="left:335.0px;top:11.0px;width:1px;height:1px;background:#222"></div><div class="t" style="left:328.7px;top:4px;width:24px;text-align:center">13</div><div class="a" style="left:345.4px;top:11.0px;width:1px;height:1px;background:#222"></div><div class="a" style="left:350.6px;top:10.0px;width:1px;height:3px;background:#222"></div><div class="a" style="left:355.8px;top:11.0px;width:1px;height:1px;background:#222"></div><div class="t" style="left:349.5px;top:4px;width:24px;text-align:center">14</div><div class="a" style="left:366.2px;top:11.0px;width:1px;height:1px;background:#222"></div><div class="a" style="left:371.4px;top:10.0px;width:1px;height:3px;background:#222"></div><div class="a" style="left:376.6px;top:11.0px;width:1px;height:1px;background:#222"></div><div class="t" style="left:370.3px;top:4px;width:24px;text-align:center">15</div><div class="a" style="left:387.0px;top:11.0px;width:1px;height:1px;background:#222"></div><div class="a" style="left:392.2px;top:10.0px;width:1px;height:3px;background:#222"></div><div class="a" style="left:397.4px;top:11.0px;width:1px;height:1px;background:#222"></div><div class="t" style="left:391.1px;top:4px;width:24px;text-align:center">16</div><div class="a" style="left:407.8px;top:11.0px;width:1px;height:1px;background:#222"></div><div class="a" style="left:413.0px;top:10.0px;width:1px;height:3px;background:#222"></div><div class="a" style="left:418.2px;top:11.0px;width:1px;height:1px;background:#222"></div><div class="t" style="left:411.9px;top:4px;width:24px;text-align:center">17</div><div class="a" style="left:428.6px;top:11.0px;width:1px;height:1px;background:#222"></div><div class="a" style="left:433.8px;top:10.0px;width:1px;height:3px;background:#222"></div><div class="a" style="left:439.0px;top:11.0px;width:1px;height:1px;background:#222"></div><div class="t" style="left:432.7px;top:4px;width:24px;text-align:center">18</div><div class="a" style="left:449.4px;top:11.0px;width:1px;height:1px;background:#222"></div><div class="a" style="left:454.6px;top:10.0px;width:1px;height:3px;background:#222"></div><div class="a" style="left:459.8px;top:11.0px;width:1px;height:1px;background:#222"></div><div class="t" style="left:453.5px;top:4px;width:24px;text-align:center">19</div></div>
  <div class="a" style="left:395px;top:132px;width:1px;height:23px;background:#000"></div>
  <svg style="left:96px;top:132px" width="23" height="23" viewBox="0 0 23 23"><path d="M2 1 L21 1 L11.5 11.5 L21 22 L2 22 L11.5 11.5Z" fill="#fff" stroke="#888" stroke-width="1"/></svg>
  <svg style="left:495px;top:140px" width="14" height="15" viewBox="0 0 14 15"><path d="M1 14 L8 6 L14 14Z" fill="#fff" stroke="#888"/><path d="M8 1 L14 1" stroke="#999"/></svg>
  <!-- vertical ruler -->
  <div class="a" style="left:8px;top:160px;width:35px;height:327px;background:#eef0f4"></div>
  <div class="a" style="left:14px;top:160px;width:22px;height:327px;background:#fff;border-left:1px solid #c8c8c8;border-right:1px solid #c8c8c8"></div>
  <div id="vruler" class="a" style="left:14px;top:160px;width:22px;height:327px;overflow:hidden;font-size:14.5px;color:#111"><div class="a" style="left:11.0px;top:-4.1px;width:1px;height:1px;background:#222"></div><div class="a" style="left:10.0px;top:1.1px;width:3px;height:1px;background:#222"></div><div class="a" style="left:11.0px;top:6.3px;width:1px;height:1px;background:#222"></div><div class="t" style="left:-1px;top:5.0px;width:24px;height:14px;text-align:center;transform:rotate(-90deg)">1</div><div class="a" style="left:11.0px;top:16.7px;width:1px;height:1px;background:#222"></div><div class="a" style="left:10.0px;top:21.9px;width:3px;height:1px;background:#222"></div><div class="a" style="left:11.0px;top:27.1px;width:1px;height:1px;background:#222"></div><div class="t" style="left:-1px;top:25.8px;width:24px;height:14px;text-align:center;transform:rotate(-90deg)">2</div><div class="a" style="left:11.0px;top:37.5px;width:1px;height:1px;background:#222"></div><div class="a" style="left:10.0px;top:42.7px;width:3px;height:1px;background:#222"></div><div class="a" style="left:11.0px;top:47.9px;width:1px;height:1px;background:#222"></div><div class="t" style="left:-1px;top:46.6px;width:24px;height:14px;text-align:center;transform:rotate(-90deg)">3</div><div class="a" style="left:11.0px;top:58.3px;width:1px;height:1px;background:#222"></div><div class="a" style="left:10.0px;top:63.5px;width:3px;height:1px;background:#222"></div><div class="a" style="left:11.0px;top:68.7px;width:1px;height:1px;background:#222"></div><div class="t" style="left:-1px;top:67.4px;width:24px;height:14px;text-align:center;transform:rotate(-90deg)">4</div><div class="a" style="left:11.0px;top:79.1px;width:1px;height:1px;background:#222"></div><div class="a" style="left:10.0px;top:84.3px;width:3px;height:1px;background:#222"></div><div class="a" style="left:11.0px;top:89.5px;width:1px;height:1px;background:#222"></div><div class="t" style="left:-1px;top:88.2px;width:24px;height:14px;text-align:center;transform:rotate(-90deg)">5</div><div class="a" style="left:11.0px;top:99.9px;width:1px;height:1px;background:#222"></div><div class="a" style="left:10.0px;top:105.1px;width:3px;height:1px;background:#222"></div><div class="a" style="left:11.0px;top:110.3px;width:1px;height:1px;background:#222"></div><div class="t" style="left:-1px;top:109.0px;width:24px;height:14px;text-align:center;transform:rotate(-90deg)">6</div><div class="a" style="left:11.0px;top:120.7px;width:1px;height:1px;background:#222"></div><div class="a" style="left:10.0px;top:125.9px;width:3px;height:1px;background:#222"></div><div class="a" style="left:11.0px;top:131.1px;width:1px;height:1px;background:#222"></div><div class="t" style="left:-1px;top:129.8px;width:24px;height:14px;text-align:center;transform:rotate(-90deg)">7</div><div class="a" style="left:11.0px;top:141.5px;width:1px;height:1px;background:#222"></div><div class="a" style="left:10.0px;top:146.7px;width:3px;height:1px;background:#222"></div><div class="a" style="left:11.0px;top:151.9px;width:1px;height:1px;background:#222"></div><div class="t" style="left:-1px;top:150.6px;width:24px;height:14px;text-align:center;transform:rotate(-90deg)">8</div><div class="a" style="left:11.0px;top:162.3px;width:1px;height:1px;background:#222"></div><div class="a" style="left:10.0px;top:167.5px;width:3px;height:1px;background:#222"></div><div class="a" style="left:11.0px;top:172.7px;width:1px;height:1px;background:#222"></div><div class="t" style="left:-1px;top:171.4px;width:24px;height:14px;text-align:center;transform:rotate(-90deg)">9</div><div class="a" style="left:11.0px;top:183.1px;width:1px;height:1px;background:#222"></div><div class="a" style="left:10.0px;top:188.3px;width:3px;height:1px;background:#222"></div><div class="a" style="left:11.0px;top:193.5px;width:1px;height:1px;background:#222"></div><div class="t" style="left:-1px;top:192.2px;width:24px;height:14px;text-align:center;transform:rotate(-90deg)">10</div><div class="a" style="left:11.0px;top:203.9px;width:1px;height:1px;background:#222"></div><div class="a" style="left:10.0px;top:209.1px;width:3px;height:1px;background:#222"></div><div class="a" style="left:11.0px;top:214.3px;width:1px;height:1px;background:#222"></div><div class="t" style="left:-1px;top:213.0px;width:24px;height:14px;text-align:center;transform:rotate(-90deg)">11</div><div class="a" style="left:11.0px;top:224.7px;width:1px;height:1px;background:#222"></div><div class="a" style="left:10.0px;top:229.9px;width:3px;height:1px;background:#222"></div><div class="a" style="left:11.0px;top:235.1px;width:1px;height:1px;background:#222"></div><div class="t" style="left:-1px;top:233.8px;width:24px;height:14px;text-align:center;transform:rotate(-90deg)">12</div><div class="a" style="left:11.0px;top:245.5px;width:1px;height:1px;background:#222"></div><div class="a" style="left:10.0px;top:250.7px;width:3px;height:1px;background:#222"></div><div class="a" style="left:11.0px;top:255.9px;width:1px;height:1px;background:#222"></div><div class="t" style="left:-1px;top:254.6px;width:24px;height:14px;text-align:center;transform:rotate(-90deg)">13</div><div class="a" style="left:11.0px;top:266.3px;width:1px;height:1px;background:#222"></div><div class="a" style="left:10.0px;top:271.5px;width:3px;height:1px;background:#222"></div><div class="a" style="left:11.0px;top:276.7px;width:1px;height:1px;background:#222"></div><div class="t" style="left:-1px;top:275.4px;width:24px;height:14px;text-align:center;transform:rotate(-90deg)">14</div><div class="a" style="left:11.0px;top:287.1px;width:1px;height:1px;background:#222"></div><div class="a" style="left:10.0px;top:292.3px;width:3px;height:1px;background:#222"></div><div class="a" style="left:11.0px;top:297.5px;width:1px;height:1px;background:#222"></div><div class="t" style="left:-1px;top:296.2px;width:24px;height:14px;text-align:center;transform:rotate(-90deg)">15</div><div class="a" style="left:11.0px;top:307.9px;width:1px;height:1px;background:#222"></div><div class="a" style="left:10.0px;top:313.1px;width:3px;height:1px;background:#222"></div><div class="a" style="left:11.0px;top:318.3px;width:1px;height:1px;background:#222"></div><div class="t" style="left:-1px;top:317.0px;width:24px;height:14px;text-align:center;transform:rotate(-90deg)">16</div><div class="a" style="left:11.0px;top:328.7px;width:1px;height:1px;background:#222"></div><div class="a" style="left:10.0px;top:333.9px;width:3px;height:1px;background:#222"></div><div class="a" style="left:11.0px;top:339.1px;width:1px;height:1px;background:#222"></div></div>
  <!-- canvas -->
  <div class="a" style="left:41px;top:160px;width:2px;height:327px;background:#111"></div>
  <div class="a" style="left:43px;top:162px;width:466px;height:325px;background:#fff;overflow:hidden">
    <div class="a" style="left:42px;top:0;width:4px;height:327px;background:linear-gradient(90deg,#c8c8c8,#888 60%,#f4f4f4)"></div>
    <div class="a" style="left:65px;top:0;width:1px;height:327px;background:#c0c0c0"></div>
    <div class="a" style="left:460px;top:0;width:1px;height:327px;background:#c0c0c0"></div>
  </div>
  <!-- drawing objects -->
  <svg style="left:189px;top:160px" width="275" height="210" viewBox="0 0 275 210">
    <defs>
      <linearGradient id="gFront" x1="0" y1="0" x2="1" y2="1"><stop offset="0" stop-color="#e2b07c"/><stop offset=".45" stop-color="#a85a40"/><stop offset="1" stop-color="#72201c"/></linearGradient>
      <linearGradient id="gTopIn" x1="0" y1="0" x2="1" y2="0"><stop offset="0" stop-color="#d8884a"/><stop offset="1" stop-color="#a04020"/></linearGradient>
      <linearGradient id="gBarT" x1="0" y1="0" x2="0" y2="1"><stop offset="0" stop-color="#ffb020"/><stop offset=".3" stop-color="#ff8010"/><stop offset=".6" stop-color="#ff4a00"/><stop offset="1" stop-color="#ff3800"/></linearGradient>
      <linearGradient id="gRim" x1="0" y1="0" x2="0" y2="1"><stop offset="0" stop-color="#ffb020"/><stop offset=".5" stop-color="#ff7010"/><stop offset="1" stop-color="#ff4a00"/></linearGradient>
      <linearGradient id="gL" x1="0" y1="0" x2="1" y2="0"><stop offset="0" stop-color="#ff7010"/><stop offset=".25" stop-color="#ff4000"/><stop offset="1" stop-color="#ff3800"/></linearGradient>
      <linearGradient id="gR" x1="0" y1="0" x2="1" y2="0"><stop offset="0" stop-color="#ff9010"/><stop offset=".3" stop-color="#ff5000"/><stop offset="1" stop-color="#ff3800"/></linearGradient>
      <linearGradient id="gB" x1="0" y1="0" x2="0" y2="1"><stop offset="0" stop-color="#ffb020"/><stop offset=".5" stop-color="#ff8a10"/><stop offset="1" stop-color="#ff4000"/></linearGradient>
    </defs>
    <path d="M61.8 15.4 L213.7 15.4 L259 47 L252.7 191.5 L240 201 L39.6 201 L28 189.4 L15.4 54.4 L20.7 43.9Z" fill="#888" stroke="#888" stroke-width="2.5" stroke-linejoin="round"/>
    <path d="M53.8 7.4 L205.7 7.4 L251 39 L244.7 183.5 L232 193 L31.6 193 L20 181.4 L7.4 46.4 L12.7 35.9Z" fill="#ff3c00" stroke="#ff3c00" stroke-width="2.5" stroke-linejoin="round"/>
    <path d="M53.8 7.4 L205.7 7.4 L230 24 L194 20 L65.4 20 L30 24Z" fill="url(#gRim)"/>
    <path d="M12.7 35.9 L53.8 7.4 L65.4 20 L60.1 30.6 Z" fill="#ffa020" opacity=".8"/>
    <path d="M205.7 7.4 L251 39 L200.4 30.6 L194 20Z" fill="#ffb818" opacity=".9"/>
    <path d="M12 36 L60.1 30.6 L200.4 30.6 L251 39 L246 55 L222 61.2 L48.5 61.2 L10 52Z" fill="url(#gBarT)"/>
    <path d="M8 50 L48.5 61.2 L55.9 167.7 L20 181.4Z" fill="url(#gL)"/>
    <path d="M211 61.2 L246 55 L251 60 L244.7 183.5 L204.6 167.7Z" fill="url(#gR)"/>
    <path d="M55.9 167.7 L204.6 167.7 L236 190 L232 193 L31.6 193 L24 186Z" fill="url(#gB)"/>
    <path d="M65.4 20 L194 20 L200.4 30.6 L60.1 30.6Z" fill="url(#gTopIn)"/>
    <path d="M48.5 61.2 L211 61.2 L204.6 167.7 L55.9 167.7Z" fill="url(#gFront)"/>
  </svg>
  <svg style="left:135px;top:252px" width="45" height="200" viewBox="0 0 45 200">
    <path d="M22.3 4.1 L40 97.1 L33.2 97.1 L33.2 135.4 L12.2 135.4 L12.2 97.1 L4.4 97.1Z" fill="#000"/>
    <rect x="5" y="159" width="36" height="36" fill="#000"/>
  </svg>
  <svg style="left:265px;top:365px" width="95" height="30" viewBox="0 0 95 30"><path d="M5 23.4 L88.8 4.4" stroke="#a8104a" stroke-width="2.2"/></svg>
  <div class="a" style="left:180px;top:400px;width:261px;height:75px;background:#888;border-radius:11px"></div>
  <div class="a" style="left:176px;top:396px;width:261px;height:75px;background:#cfe4f3;border:1px solid #5a5a5a;border-radius:11px"></div>
  <div class="t" style="left:296px;top:427px;font-size:13px;color:#111">test</div>
  <!-- v scrollbar -->
  <div class="a" style="left:509px;top:132px;width:21px;height:355px;background:linear-gradient(90deg,#e8e8e8,#f4f4f4 50%,#ececec)"></div>
  <svg style="left:513px;top:136px" width="14" height="10" viewBox="0 0 14 10"><path d="M2 8 L7 3 L12 8Z" fill="#333"/></svg>
  <svg style="left:513px;top:470px" width="14" height="10" viewBox="0 0 14 10"><path d="M2 2 L7 7 L12 2Z" fill="#555"/></svg>
  <div class="a" style="left:510px;top:237px;width:19px;height:80px;background:linear-gradient(90deg,#f2f2f2,#dadada);border:1px solid #999;border-radius:2px"></div>
  <div class="a" style="left:515px;top:271px;width:9px;height:9px;border-top:1px solid #555;border-bottom:1px solid #555"></div>
  <div class="a" style="left:515px;top:275px;width:9px;height:1px;background:#555"></div>
  <div class="a" style="left:530px;top:127px;width:7px;height:360px;background:#f0f0f0;border-left:1px solid #fff"></div>
  <div class="a" style="left:532px;top:300px;width:3px;height:36px;border-left:2px dotted #888"></div>
  <!-- sidebar -->
  <div class="a" style="left:536px;top:127px;width:40px;height:360px;background:#efefef;border-left:1px solid #a8a8a8"></div>
  <svg style="left:548px;top:138px" width="16" height="14" viewBox="0 0 16 14"><path d="M2 2 L11 2 M2 5 L11 5 M2 8 L11 8" stroke="#1a2a4a" stroke-width="1.4"/><path d="M8 9 L14 9 L11 13Z" fill="#1a2a4a"/></svg>
  <div class="a" style="left:542px;top:166px;width:30px;height:1px;background:#d0d0d0"></div>
  <div class="a" style="left:540px;top:170px;width:32px;height:32px;border:1px solid #999;border-radius:4px;background:linear-gradient(#f8f8f8,#e4e4e4)"></div>
  <svg style="left:545px;top:174px" width="22" height="24" viewBox="0 0 22 24"><path d="M2 5 L10 1 L12 2 L12 12 L2 16Z" fill="#20a0f0"/><path d="M12 2 L20 6 L20 16 L12 12Z" fill="#80d030"/><path d="M4 14 L12 10 L20 14 L20 21 L12 23 L4 20Z" fill="#70d020"/><path d="M2 5 L2 16 L10 20 M10 9 L10 20 M2 10 L10 14 L20 10" stroke="#fff" stroke-width=".8" fill="none"/></svg>
  <svg style="left:545px;top:209px" width="24" height="24" viewBox="0 0 24 24"><path d="M3 8 L12 6 L14 22 L4 20Z" fill="#1a70c0"/><path d="M12 8 Q18 10 16 20 L12 22Z" fill="#50a040"/><circle cx="8" cy="6" r="4" fill="#d06020"/><path d="M16 2 L17 5 L20 5 L18 7 L19 10 L16 8 L13 10 L14 7 L12 5 L15 5Z" fill="#f0c020"/><circle cx="21" cy="14" r="2.5" fill="#e84080"/><circle cx="3" cy="12" r="2.5" fill="#e84080"/><circle cx="11" cy="3" r="2" fill="#a040e0"/></svg>
  <svg style="left:545px;top:245px" width="24" height="22" viewBox="0 0 24 22"><path d="M2 6 L18 2 L22 14 L6 18Z" fill="#fff" stroke="#888" stroke-width=".8"/><path d="M5 7 L17 4 L20 13 L8 16Z" fill="#60b0e8"/><path d="M8 16 L11 10 L14 13 L20 13Z" fill="#60a040"/><path d="M10 12 L12 9 L14 11 L14 14 L10 15Z" fill="#fff" stroke="#345" stroke-width=".6"/></svg>
  <svg style="left:545px;top:278px" width="24" height="24" viewBox="0 0 24 24"><circle cx="12" cy="12" r="10" fill="#fff" stroke="#f09020" stroke-width="2.6"/><path d="M15 6 L13 13 L9 18 L11 11Z" fill="#e03030"/><path d="M11 11 L9 18 L15 6Z" fill="#3a6ad0" opacity=".8"/><text x="12" y="7" font-size="5" font-weight="bold" text-anchor="middle" fill="#333" font-family="Liberation Sans">N</text></svg>
  <!-- tab bar -->
  <div class="a" style="left:8px;top:487px;width:501px;height:20px;background:#f0f0f0"></div>
  <svg style="left:8px;top:486px" width="370" height="22" viewBox="0 0 370 22">
    <g fill="#f0f0f0" stroke="#a0a0a0"><rect x="3.5" y="1.5" width="18" height="18" rx="2"/><rect x="24.5" y="1.5" width="18" height="18" rx="2"/></g>
    <g fill="#e8e8e8" stroke="#333"><rect x="45.5" y="1.5" width="18" height="18" rx="2"/><rect x="66.5" y="1.5" width="18" height="18" rx="2"/></g>
    <path d="M9 5 L9 16 M17 5 L11 10.5 L17 16Z" fill="#aaa" stroke="#aaa"/><path d="M37 5 L31 10.5 L37 16Z" fill="#aaa"/>
    <path d="M51 5 L58 10.5 L51 16Z" fill="#000"/><path d="M71 5 L78 10.5 L71 16Z M79 5 L79 16" fill="#000" stroke="#000" stroke-width="1.2"/>
    <path d="M88 1 L95 21 L143 21 L150 1" fill="#fff" stroke="#555"/>
    <path d="M150 1 L143 21 L211 21 L218 1Z" fill="#f4f4f4" stroke="#777"/>
    <path d="M218 1 L211 21 L338 21 L344 1Z" fill="#f4f4f4" stroke="#777"/>
    <path d="M0 1.5 L88 1.5 M150 1.5 L370 1.5" stroke="#999"/>
    <path d="M351 2 L351 21 M356 2 L356 21" stroke="#777"/>
  </svg>
  <div class="t" style="left:104px;top:490px;font-size:14.5px;font-weight:bold;color:#000">Layout</div>
  <div class="t" style="left:162px;top:490px;font-size:14.5px;color:#111">Controls</div>
  <div class="t" style="left:232px;top:490px;font-size:14.5px;color:#111">Dimension Lines</div>
  <div class="a" style="left:359px;top:487px;width:150px;height:20px;background:#ececec"></div>
  <svg style="left:364px;top:492px" width="10" height="12" viewBox="0 0 10 12"><path d="M7 1 L2 6 L7 11Z" fill="#333"/></svg>
  <svg style="left:493px;top:492px" width="10" height="12" viewBox="0 0 10 12"><path d="M3 1 L8 6 L3 11Z" fill="#333"/></svg>
  <div class="a" style="left:412px;top:488px;width:36px;height:18px;background:linear-gradient(180deg,#f4f4f4,#dcdcdc);border:1px solid #999;border-radius:2px"></div>
  <div class="a" style="left:425px;top:492px;width:9px;height:9px;border-left:1px solid #555;border-right:1px solid #555"></div>
  <div class="a" style="left:429px;top:492px;width:1px;height:9px;background:#555"></div>
  <div class="a" style="left:509px;top:487px;width:67px;height:20px;background:#f0f0f0"></div>
  <div class="a" style="left:531px;top:487px;width:1px;height:20px;background:#c0c0c0"></div>
  <!-- drawing toolbar -->
  <div class="a" style="left:8px;top:507px;width:568px;height:33px;background:linear-gradient(180deg,#f2f4fa,#dfe5f3 40%,#d4dcef);border-top:1px solid #fff;border-bottom:1px solid #b8c0d4"></div>
  <div class="a" style="left:564px;top:510px;width:11px;height:27px;background:linear-gradient(180deg,#e8ecf4,#a8a8b0)"></div>
  <svg style="left:564px;top:512px" width="11" height="24" viewBox="0 0 11 24"><path d="M1 2 L4 5 L1 8 M5 2 L8 5 L5 8" stroke="#000" stroke-width="1.2" fill="none"/><path d="M2 17 L9 17 L5.5 21Z" fill="#111"/></svg>
  <div class="a" style="left:13px;top:513px;width:2px;height:20px;border-left:2px dotted #7a8090"></div>
  <div class="a" style="left:20px;top:512px;width:25px;height:24px;background:linear-gradient(180deg,#dadde6,#c4c8d4);border:1px solid #555a6a;border-radius:3px"></div>
  <svg style="left:0;top:507px" width="570" height="33" viewBox="0 0 570 33">
    <path d="M27 9 L27 22 L30 19 L33 25 L35 24 L32 18 L36 18Z" fill="#fff" stroke="#111" stroke-width="1"/>
    <path d="M50 8 L50 26" stroke="#b0b4c0"/>
    <path d="M58 24 L72 10" stroke="#2a70d0" stroke-width="1.6"/>
    <path d="M82 17 L96 17 M91 12 L96 17 L91 22" stroke="#2a80e0" stroke-width="1.6" fill="none"/>
    <rect x="107" y="11.5" width="16" height="11" fill="#4a90e0" stroke="#1a4a9a"/>
    <ellipse cx="140" cy="17" rx="8" ry="5.5" fill="#4a90e0" stroke="#1a4a9a"/>
    <text x="166" y="25" font-size="19" font-weight="bold" text-anchor="middle" fill="#3a5a7a" font-family="Liberation Serif">T</text>
    <path d="M181 8 L181 26" stroke="#b0b4c0"/>
    <path d="M190 20 Q192 26 198 22 Q202 20 206 23" stroke="#2a70d0" stroke-width="1.6" fill="none"/><path d="M195 19 L203 9 L206 11 L198 21 L194 22Z" fill="#f0c040" stroke="#805010" stroke-width=".7"/>
    <path d="M212 16 L218 16 L215 19Z" fill="#111"/>
    <circle cx="229" cy="12" r="2.2" fill="#fff" stroke="#2a70d0" stroke-width="1.4"/><circle cx="240" cy="22" r="2.2" fill="#fff" stroke="#2a70d0" stroke-width="1.4"/><path d="M231 13 L234 13 L234 21 L238 21" stroke="#2a70d0" stroke-width="1.4" fill="none"/>
    <path d="M248 16 L254 16 L251 19Z" fill="#111"/>
    <path d="M262 17 L276 17 M271 12 L276 17 L271 22" stroke="#2a80e0" stroke-width="1.6" fill="none"/>
    <path d="M284 16 L290 16 L287 19Z" fill="#111"/>
    <path d="M305 9 L313 17 L305 25 L297 17Z" fill="#4a90e0" stroke="#1a4a9a"/>
    <path d="M320 16 L326 16 L323 19Z" fill="#111"/>
    <circle cx="341" cy="17" r="7.5" fill="#7ab4ec" stroke="#2a60b0"/><circle cx="338" cy="15" r="1" fill="#1a3a7a"/><circle cx="344" cy="15" r="1" fill="#1a3a7a"/><path d="M337 19 Q341 22 345 19" stroke="#1a3a7a" fill="none"/>
    <path d="M356 16 L362 16 L359 19Z" fill="#111"/>
    <path d="M370 17 L376 12 L376 15 L380 15 L380 12 L386 17 L380 22 L380 19 L376 19 L376 22Z" fill="#7ab4ec" stroke="#2a60b0"/>
    <path d="M392 16 L398 16 L395 19Z" fill="#111"/>
    <rect x="406" y="10" width="15" height="15" fill="#5aa0e8" stroke="#1a4a9a"/><path d="M410 10 L410 25 M406 14 L421 14" stroke="#fff"/>
    <path d="M428 16 L434 16 L431 19Z" fill="#111"/>
    <path d="M443 10 Q443 8 446 8 L456 8 Q459 8 459 11 L459 18 Q459 20 456 20 L449 20 L444 25 L446 20 Q443 20 443 17Z" fill="#7ab4ec" stroke="#2a60b0"/>
    <path d="M464 16 L470 16 L467 19Z" fill="#111"/>
    <path d="M485 8 L488 14 L494 14 L489 18 L491 25 L485 21 L479 25 L481 18 L476 14 L482 14Z" fill="#5aa0e8" stroke="#1a4a9a"/>
    <path d="M500 16 L506 16 L503 19Z" fill="#111"/>
    <path d="M514 8 L514 26" stroke="#b0b4c0"/>
    <path d="M524 24 L527 13 L535 9 L538 18 L532 24Z" fill="none" stroke="#2a5a9a" stroke-width="1.2"/><g fill="#fff" stroke="#1a4a9a"><circle cx="524" cy="24" r="1.6"/><circle cx="527" cy="13" r="1.6"/><circle cx="535" cy="9" r="1.6"/><circle cx="538" cy="18" r="1.6"/><circle cx="532" cy="24" r="1.6"/></g>
  </svg>
  <!-- status bar -->
  <div class="a" style="left:8px;top:540px;width:568px;height:26px;background:#f0f0f0"></div>
  <div class="a" style="left:211px;top:543px;width:1px;height:21px;background:#888"></div>
  <svg style="left:219px;top:545px" width="16" height="14" viewBox="0 0 16 14"><path d="M4 1 L4 8 M1 4 L8 4" stroke="#0000d0" stroke-width="1.2"/><path d="M6 6 L15 6 L15 12 L4 12 L4 8" stroke="#000" stroke-dasharray="1 1" fill="none"/></svg>
  <div class="t" style="left:239px;top:548px;font-size:14.5px;color:#111">5.44 / 6.48</div>
  <svg style="left:326px;top:545px" width="16" height="14" viewBox="0 0 16 14"><path d="M4 1 L14 1 L14 11 L4 11 Z" stroke="#000" stroke-dasharray="1 1" fill="none"/><path d="M1 1 L1 4 M1 8 L1 11" stroke="#000"/></svg>
  <div class="t" style="left:347px;top:548px;font-size:14.5px;color:#111">0.00 x 0.00</div>
  <div class="a" style="left:434px;top:543px;width:1px;height:21px;background:#888"></div>
  <div class="a" style="left:453px;top:543px;width:1px;height:21px;background:#888"></div>
  <div class="a" style="left:484px;top:543px;width:1px;height:21px;background:#888"></div>
  <div class="t" style="left:492px;top:548px;font-size:14.5px;color:#111">Slide 1 / 1</div>
  <div class="a" style="left:566px;top:543px;width:1px;height:21px;background:#888"></div>
</div>

</body></html>
